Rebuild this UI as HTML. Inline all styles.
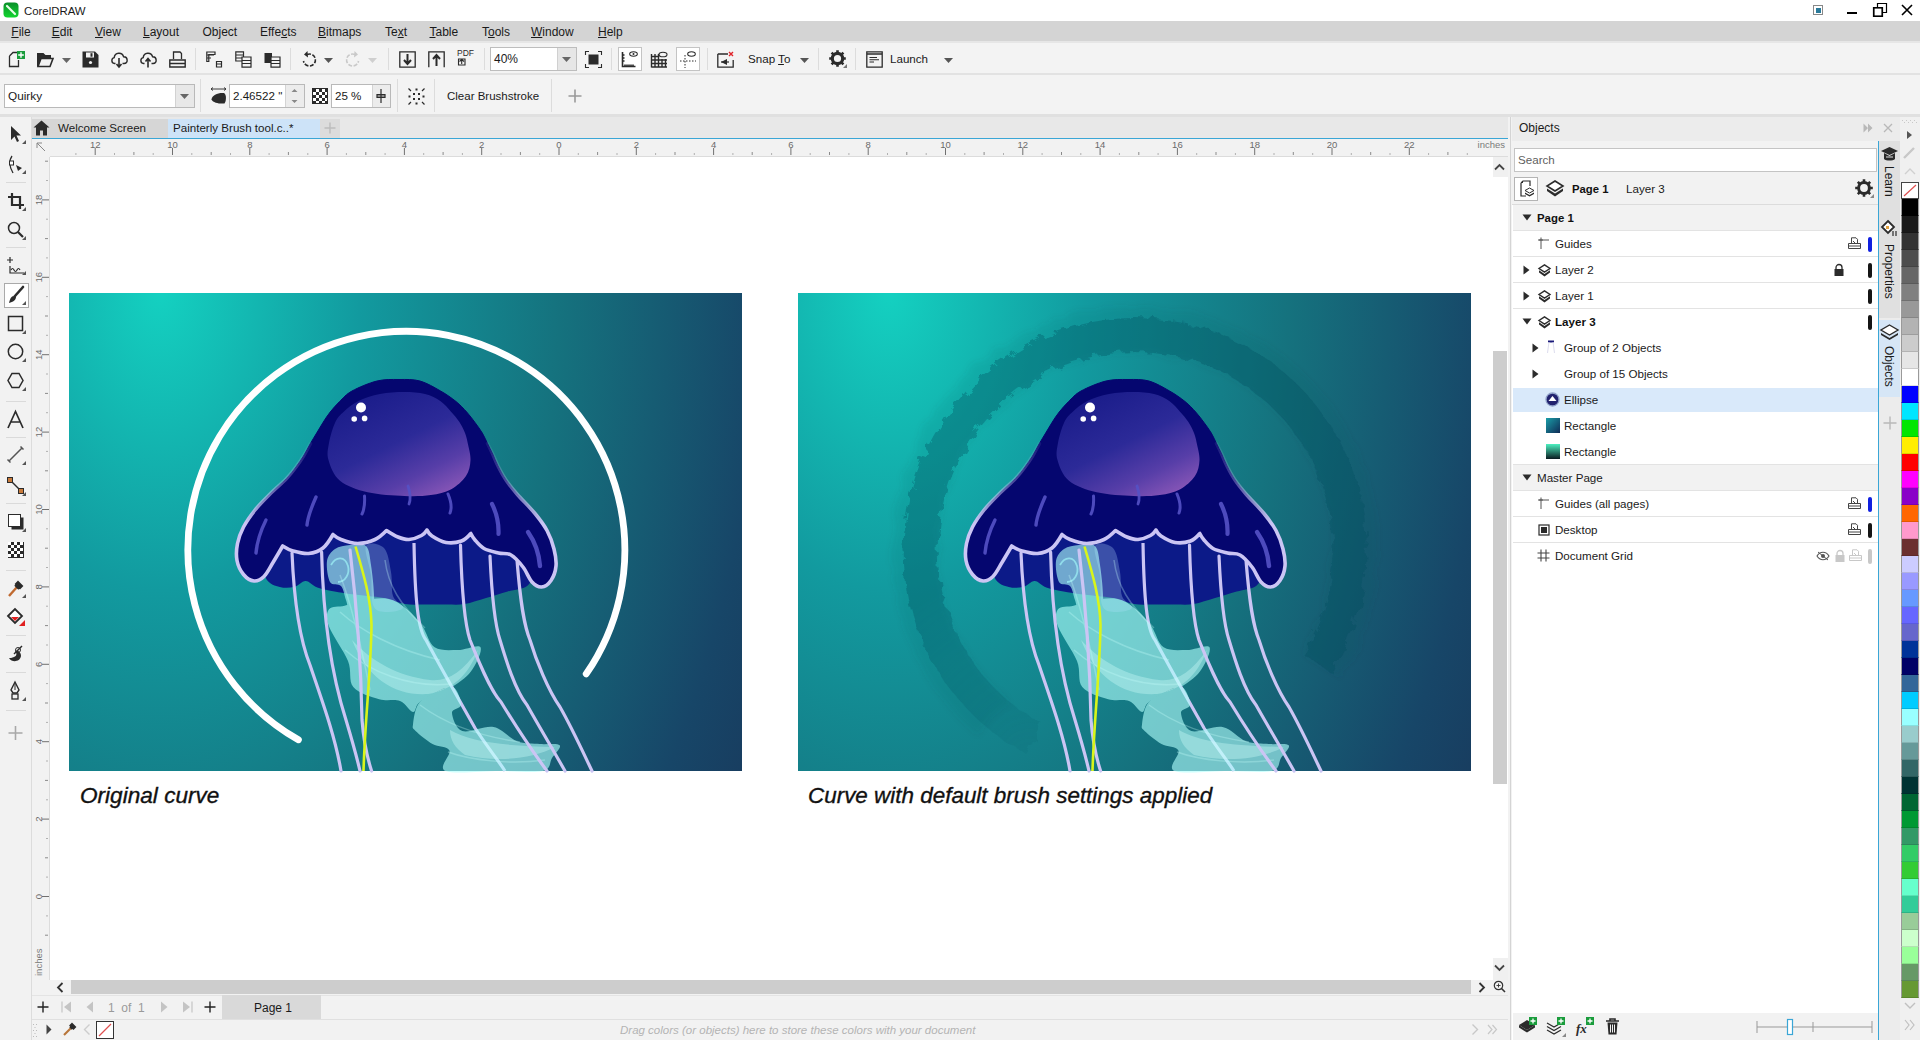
<!DOCTYPE html><html><head><meta charset="utf-8"><style>
*{margin:0;padding:0;box-sizing:border-box}
html,body{width:1920px;height:1040px;overflow:hidden;background:#f3f3f3;font-family:"Liberation Sans",sans-serif;color:#1a1a1a}
div{position:absolute}
.t{white-space:nowrap;font-size:12px;line-height:14px}
svg{position:absolute;overflow:visible}
</style></head><body><div style="left:0px;top:0px;width:1920px;height:21px;background:#fff"></div>
<svg style="left:3px;top:2px" width="16" height="16" viewBox="0 0 16 16"><defs><linearGradient id="lg" x1="0" y1="0" x2="0" y2="1"><stop offset="0" stop-color="#0a8f2a"/><stop offset="1" stop-color="#12d62f"/></linearGradient></defs><rect x="0.5" y="0.5" width="15" height="15" rx="4" fill="url(#lg)"/><path d="M4 4 L12 12" stroke="#e8ffe8" stroke-width="2.2" stroke-linecap="round"/></svg>
<div class="t" style="left:24px;top:4px;font-size:11.4px;color:#1a1a1a">CorelDRAW</div>
<svg style="left:1812px;top:4px" width="12" height="12"><rect x="1.5" y="1.5" width="9" height="9" fill="#fff" stroke="#888"/><rect x="4" y="4" width="5" height="5" fill="#2a7a9a"/></svg>
<div style="left:1847px;top:12px;width:10px;height:2px;background:#000"></div>
<svg style="left:1873px;top:3px" width="14" height="14"><path d="M4.5 0.5h9v9h-9z M0.5 4.5h9v9h-9z" fill="none" stroke="#000" stroke-width="1.2"/><rect x="1" y="5" width="8" height="8" fill="#fff" stroke="#000" stroke-width="1.2"/></svg>
<svg style="left:1901px;top:4px" width="12" height="12"><path d="M1 1L11 11M11 1L1 11" stroke="#000" stroke-width="1.6"/></svg>
<div style="left:0px;top:21px;width:1920px;height:20px;background:#d4d4d4"></div>
<div style="left:0px;top:41px;width:1920px;height:2px;background:#e6e6e6"></div>
<div class="t" style="left:11.3px;top:25px;font-size:12px;color:#1a1a1a"><u>F</u>ile</div>
<div class="t" style="left:51.7px;top:25px;font-size:12px;color:#1a1a1a"><u>E</u>dit</div>
<div class="t" style="left:95px;top:25px;font-size:12px;color:#1a1a1a"><u>V</u>iew</div>
<div class="t" style="left:143px;top:25px;font-size:12px;color:#1a1a1a"><u>L</u>ayout</div>
<div class="t" style="left:202.5px;top:25px;font-size:12px;color:#1a1a1a">Ob<u>j</u>ect</div>
<div class="t" style="left:260px;top:25px;font-size:12px;color:#1a1a1a">Effe<u>c</u>ts</div>
<div class="t" style="left:318px;top:25px;font-size:12px;color:#1a1a1a"><u>B</u>itmaps</div>
<div class="t" style="left:385px;top:25px;font-size:12px;color:#1a1a1a">Te<u>x</u>t</div>
<div class="t" style="left:429.5px;top:25px;font-size:12px;color:#1a1a1a"><u>T</u>able</div>
<div class="t" style="left:482px;top:25px;font-size:12px;color:#1a1a1a">T<u>o</u>ols</div>
<div class="t" style="left:531px;top:25px;font-size:12px;color:#1a1a1a"><u>W</u>indow</div>
<div class="t" style="left:598px;top:25px;font-size:12px;color:#1a1a1a"><u>H</u>elp</div>
<div style="left:0px;top:43px;width:1920px;height:31px;background:#f3f3f3"></div>
<div style="left:0px;top:73px;width:1920px;height:2px;background:#e2e2e2"></div>
<div style="left:0px;top:75px;width:1920px;height:40px;background:#f3f3f3"></div>
<div style="left:0px;top:114px;width:1920px;height:3px;background:#e0e0e0"></div>
<div style="left:0px;top:117px;width:31px;height:923px;background:#f2f2f2"></div>
<div style="left:31px;top:117px;width:1px;height:923px;background:#dcdcdc"></div>
<div style="left:32px;top:117px;width:1476px;height:21px;background:#e8e8e8"></div>
<div style="left:32px;top:119px;width:136px;height:19px;background:#d6d6d6"></div>
<div style="left:168px;top:119px;width:152px;height:19px;background:#cde3f8"></div>
<div style="left:320px;top:119px;width:20px;height:19px;background:#dcdcdc"></div>
<div style="left:32px;top:138px;width:1476px;height:1px;background:#3aa6d6"></div>
<div style="left:32px;top:139px;width:1476px;height:18px;background:#f2f2f2"></div>
<div style="left:32px;top:157px;width:18px;height:823px;background:#f2f2f2"></div>
<div style="left:50px;top:156px;width:1458px;height:1px;background:#dcdcdc"></div>
<div style="left:49px;top:157px;width:1px;height:823px;background:#dcdcdc"></div>
<div style="left:50px;top:157px;width:1458px;height:823px;background:#fff"></div>
<svg style="left:0;top:0" width="1920" height="1040" viewBox="0 0 1920 1040">
<defs>
<radialGradient id="bg" gradientUnits="userSpaceOnUse" cx="160" cy="290" r="800" gradientTransform="translate(160,290) scale(1,1.5) translate(-160,-290)"><stop offset="0" stop-color="#14d1c1"/><stop offset="0.25" stop-color="#129a9f"/><stop offset="0.5" stop-color="#15727e"/><stop offset="0.75" stop-color="#174668"/><stop offset="1" stop-color="#1a2c50"/></radialGradient>
<radialGradient id="bg2" gradientUnits="userSpaceOnUse" cx="889" cy="290" r="800" gradientTransform="translate(889,290) scale(1,1.5) translate(-889,-290)"><stop offset="0" stop-color="#14d1c1"/><stop offset="0.25" stop-color="#129a9f"/><stop offset="0.5" stop-color="#15727e"/><stop offset="0.75" stop-color="#174668"/><stop offset="1" stop-color="#1a2c50"/></radialGradient>
<linearGradient id="dome" x1="0.2" y1="0.05" x2="0.85" y2="1"><stop offset="0" stop-color="#1a1c8a"/><stop offset="0.45" stop-color="#2c2a98"/><stop offset="0.75" stop-color="#573ea8"/><stop offset="1" stop-color="#8c58b8"/></linearGradient>
<radialGradient id="fadeG"><stop offset="0" stop-color="#303030"/><stop offset="0.3" stop-color="#6a6a6a"/><stop offset="0.65" stop-color="#b0b0b0"/><stop offset="1" stop-color="#fff"/></radialGradient><filter id="soft" x="-10%" y="-10%" width="120%" height="120%"><feTurbulence type="fractalNoise" baseFrequency="0.05" numOctaves="2" seed="7"/><feDisplacementMap in="SourceGraphic" scale="10" result="d"/><feGaussianBlur in="d" stdDeviation="3"/></filter><filter id="rough" x="-10%" y="-10%" width="120%" height="120%"><feTurbulence type="fractalNoise" baseFrequency="0.09" numOctaves="3" seed="3"/><feDisplacementMap in="SourceGraphic" scale="12"/></filter>
<linearGradient id="efg" x1="0" y1="0" x2="0" y2="1"><stop offset="0" stop-color="#000"/><stop offset="0.3" stop-color="#555"/><stop offset="0.55" stop-color="#fff"/><stop offset="1" stop-color="#fff"/></linearGradient>
<mask id="edgefade" maskUnits="userSpaceOnUse" x="200" y="430" width="400" height="170"><rect x="200" y="430" width="400" height="170" fill="url(#efg)"/></mask>
<g id="jf"><path d="M262.0,560.0 C259.8,565.8 263.8,575.2 266.8,579.7 C269.8,584.2 275.3,585.8 279.8,587.0 C284.3,588.2 289.7,588.0 294.0,587.0 C298.3,586.0 301.8,580.9 305.7,581.0 C309.6,581.1 312.5,585.8 317.3,587.5 C322.1,589.2 329.2,590.4 334.6,591.5 C340.1,592.6 344.4,593.2 350.0,594.0 C355.6,594.8 362.3,595.3 368.0,596.0 C373.7,596.7 377.8,596.7 384.0,598.0 C390.2,599.3 398.0,602.9 405.0,604.0 C412.0,605.1 419.2,604.4 426.0,604.5 C432.8,604.6 439.6,604.6 446.0,604.5 C452.4,604.4 457.9,605.1 464.6,604.0 C471.3,602.9 478.8,600.1 486.0,598.0 C493.2,595.9 500.8,593.6 507.7,591.5 C514.6,589.4 523.7,589.0 527.7,585.4 C531.8,581.8 533.3,576.7 532.0,570.0 C530.7,563.3 542.0,551.7 520.0,545.0 C498.0,538.3 440.0,530.0 400.0,530.0 C360.0,530.0 303.0,540.0 280.0,545.0 C257.0,550.0 264.2,554.2 262.0,560.0 Z" fill="#0c1a88"/>
<path d="M414,543 C415,600 418,630 426,640 C440,666 458,698 475,728 C488,748 498,760 505,771" fill="none" stroke="#cbc5f4" stroke-width="3.2"/>
<path d="M366.0,546.0 C368.2,541.5 379.8,543.7 384.0,548.0 C388.2,552.3 389.5,564.0 391.0,572.0 C392.5,580.0 391.0,590.0 393.0,596.0 C395.0,602.0 404.3,605.3 403.0,608.0 C401.7,610.7 390.0,612.5 385.0,612.0 C380.0,611.5 375.3,611.2 373.0,605.0 C370.7,598.8 372.2,584.8 371.0,575.0 C369.8,565.2 363.8,550.5 366.0,546.0 Z" fill="#8aa8e0" opacity="0.38"/>
<g fill="#aefffb" opacity="0.62">
<path d="M327.0,561.0 C327.8,555.5 331.2,551.7 335.0,549.0 C338.8,546.3 344.8,545.5 350.0,545.0 C355.2,544.5 362.5,542.7 366.0,546.0 C369.5,549.3 369.7,556.8 371.0,565.0 C372.3,573.2 373.8,586.7 374.0,595.0 C374.2,603.3 375.7,611.7 372.0,615.0 C368.3,618.3 356.3,617.5 352.0,615.0 C347.7,612.5 347.8,604.8 346.0,600.0 C344.2,595.2 343.7,589.0 341.0,586.0 C338.3,583.0 332.3,586.2 330.0,582.0 C327.7,577.8 326.2,566.5 327.0,561.0 Z"/>
<path d="M329.0,609.2 C331.6,605.7 339.1,607.2 344.6,605.7 C350.1,604.2 354.8,601.6 362.0,600.5 C369.2,599.4 380.5,597.3 388.0,598.8 C395.5,600.2 401.1,604.6 406.9,609.2 C412.6,613.8 417.9,620.1 422.5,626.5 C427.1,632.9 428.7,643.4 434.6,647.3 C440.5,651.2 450.4,650.0 458.0,650.0 C465.6,650.0 478.4,643.7 480.5,647.3 C482.6,650.9 475.7,664.9 470.9,671.5 C466.1,678.1 456.8,684.0 451.9,687.0 C447.0,690.0 447.0,686.9 441.6,689.4 C436.2,691.9 424.3,698.5 419.5,702.3 C414.7,706.1 416.2,712.2 413.0,712.0 C409.8,711.8 405.6,703.1 400.0,701.0 C394.4,698.9 387.0,701.5 379.2,699.2 C371.4,696.9 358.5,693.4 353.3,687.0 C348.1,680.6 352.1,671.1 348.0,661.0 C343.9,650.9 332.2,635.1 329.0,626.5 C325.8,617.9 326.4,612.7 329.0,609.2 Z"/>
<path d="M413.0,724.4 C413.6,719.6 414.7,708.1 419.5,702.3 C424.3,696.5 435.8,691.8 441.6,689.4 C447.4,687.0 451.3,685.4 454.5,688.0 C457.7,690.6 461.4,700.9 461.0,705.0 C460.6,709.1 451.8,708.4 452.0,712.7 C452.2,717.0 455.4,728.6 462.3,731.0 C469.2,733.4 484.4,725.3 493.5,727.0 C502.6,728.7 509.2,738.5 517.0,741.3 C524.8,744.1 532.9,743.4 540.0,744.0 C547.1,744.6 557.7,742.9 559.7,745.2 C561.7,747.5 554.8,753.7 552.0,758.0 C549.2,762.3 551.6,768.8 542.9,771.0 C534.2,773.2 516.2,771.0 500.0,771.0 C483.8,771.0 453.9,774.4 445.5,771.0 C437.1,767.6 451.6,754.9 449.4,750.4 C447.2,745.9 438.1,747.2 432.5,744.0 C426.9,740.8 418.9,734.3 415.6,731.0 C412.4,727.7 412.4,729.2 413.0,724.4 Z"/>
</g>
<path d="M331,565 C336,556 345,556 348,566 C350,574 345,582 338,582" fill="none" stroke="#9ff4f6" stroke-width="1.8" opacity="0.7"/>
<g fill="#d2fffc" opacity="0.35">
<path d="M352,640 C372,662 398,676 430,680 C448,682 462,672 478,650 C468,676 452,690 428,694 C396,696 368,680 352,640 Z"/>
<path d="M450,730 C470,742 505,746 555,747 C530,760 495,762 465,755 C455,748 450,740 450,730 Z"/>
</g>
<g fill="none" stroke="#c8fffc" stroke-width="1.5" opacity="0.3">
<path d="M340,612 C360,630 395,650 440,660"/>
<path d="M345,650 C370,672 410,688 450,684"/>
<path d="M420,705 C440,720 470,735 520,742"/>
<path d="M448,752 C470,760 510,765 545,760"/>
<path d="M385,560 C388,585 400,605 425,628"/>
<path d="M340,575 C350,600 360,640 370,690"/>
</g>
<g fill="none" stroke="#cbc5f4" stroke-width="3.2" stroke-linecap="round">
<path d="M292,553 C294,600 300,640 310,665 C320,695 335,735 341,771"/>
<path d="M321.6,552 C323,610 330,670 346,720 C352,740 357,758 360,771"/>
<path d="M350,550 C356,600 361,660 362,720 C364,745 368,760 371.6,771"/>
<path d="M460.5,545 C462,600 465,625 470,640 C478,660 490,690 501,702 C515,725 530,748 547,771"/>
<path d="M490,556 C492,600 495,625 500,640 C506,660 515,690 527,705 C540,728 552,748 565,771"/>
<path d="M517,560 C521,610 525,628 530,640 C536,660 548,690 560,707 C572,728 582,750 592,771"/>
</g>
<path d="M355.5,546.5 C364,575 371,600 371.5,625 C371,670 365,720 363.5,771" fill="none" stroke="#d8f51a" stroke-width="2.6"/>
<path d="M399.0,379.5 C406.2,379.5 413.1,379.1 420.0,381.0 C426.9,382.9 434.6,387.6 440.6,391.0 C446.6,394.4 451.6,398.0 456.0,401.5 C460.4,405.0 463.5,408.5 466.7,412.0 C469.9,415.5 472.4,419.0 475.0,422.5 C477.6,426.0 480.2,429.5 482.3,433.0 C484.4,436.5 485.8,440.0 487.5,443.5 C489.2,447.0 490.9,450.2 492.7,454.0 C494.4,457.8 495.8,461.7 498.0,466.0 C500.2,470.3 502.8,475.3 506.0,480.0 C509.2,484.7 512.2,488.4 517.0,494.0 C521.8,499.6 530.0,507.4 535.0,513.5 C540.0,519.6 543.8,524.6 547.0,530.5 C550.2,536.4 552.5,543.1 554.0,549.0 C555.5,554.9 556.5,560.8 556.0,566.0 C555.5,571.2 553.4,577.0 551.0,580.5 C548.6,584.0 544.7,586.8 541.5,587.0 C538.3,587.2 535.1,585.3 532.0,582.0 C528.9,578.7 526.5,571.5 523.0,567.0 C519.5,562.5 515.1,557.3 511.0,555.0 C506.9,552.7 503.0,554.1 498.5,553.0 C494.0,551.9 487.9,550.7 484.0,548.5 C480.1,546.3 477.2,542.5 475.0,540.0 C472.8,537.5 470.8,533.5 470.8,533.5 C470.8,533.5 465.6,539.5 461.5,541.0 C457.4,542.5 450.9,543.3 446.0,542.5 C441.1,541.7 435.2,538.1 432.0,536.0 C428.8,533.9 427.0,530.0 427.0,530.0 C427.0,530.0 424.5,533.9 421.5,535.5 C418.5,537.1 412.9,539.2 409.0,539.5 C405.1,539.8 401.8,538.5 398.0,537.0 C394.2,535.5 386.5,530.5 386.5,530.5 C386.5,530.5 379.8,537.3 375.0,539.5 C370.2,541.7 363.4,543.5 357.7,543.5 C352.0,543.5 345.1,541.0 341.0,539.5 C336.9,538.0 333.0,534.5 333.0,534.5 C333.0,534.5 327.1,544.8 323.0,548.0 C318.9,551.2 313.6,553.0 308.6,553.5 C303.6,554.0 297.3,552.2 293.0,551.0 C288.7,549.8 282.7,546.0 282.7,546.0 C282.7,546.0 276.1,557.4 273.0,562.5 C269.9,567.6 267.2,573.4 264.0,576.5 C260.8,579.6 257.4,581.3 254.0,581.0 C250.6,580.7 246.3,577.9 243.5,574.5 C240.7,571.1 238.0,565.7 237.0,560.5 C236.0,555.3 236.4,549.1 237.5,543.5 C238.6,537.9 240.6,532.6 243.5,527.0 C246.4,521.4 250.7,515.4 255.0,510.0 C259.3,504.6 264.2,499.8 269.5,494.5 C274.8,489.2 282.1,483.1 286.5,478.5 C290.9,473.9 293.2,470.8 296.0,467.0 C298.8,463.2 301.1,459.9 303.5,456.0 C305.9,452.1 308.2,447.3 310.4,443.5 C312.6,439.7 314.6,436.5 316.7,433.0 C318.8,429.5 320.8,426.0 323.0,422.5 C325.2,419.0 327.4,415.5 330.2,412.0 C333.0,408.5 336.0,405.0 339.6,401.5 C343.2,398.0 345.8,394.4 352.0,391.0 C358.2,387.6 369.2,382.9 377.0,381.0 C384.8,379.1 391.8,379.5 399.0,379.5 Z" fill="#05066f" stroke="#05066f" stroke-width="1"/>
<path d="M487.5,443.5 C488.4,445.2 490.9,450.2 492.7,454.0 C494.4,457.8 495.8,461.7 498.0,466.0 C500.2,470.3 502.8,475.3 506.0,480.0 C509.2,484.7 512.2,488.4 517.0,494.0 C521.8,499.6 530.0,507.4 535.0,513.5 C540.0,519.6 543.8,524.6 547.0,530.5 C550.2,536.4 552.5,543.1 554.0,549.0 C555.5,554.9 556.5,560.8 556.0,566.0 C555.5,571.2 553.4,577.0 551.0,580.5 C548.6,584.0 544.7,586.8 541.5,587.0 C538.3,587.2 535.1,585.3 532.0,582.0 C528.9,578.7 526.5,571.5 523.0,567.0 C519.5,562.5 515.1,557.3 511.0,555.0 C506.9,552.7 503.0,554.1 498.5,553.0 C494.0,551.9 487.9,550.7 484.0,548.5 C480.1,546.3 477.2,542.5 475.0,540.0 C472.8,537.5 470.8,533.5 470.8,533.5 C470.8,533.5 465.6,539.5 461.5,541.0 C457.4,542.5 450.9,543.3 446.0,542.5 C441.1,541.7 435.2,538.1 432.0,536.0 C428.8,533.9 427.0,530.0 427.0,530.0 C427.0,530.0 424.5,533.9 421.5,535.5 C418.5,537.1 412.9,539.2 409.0,539.5 C405.1,539.8 401.8,538.5 398.0,537.0 C394.2,535.5 386.5,530.5 386.5,530.5 C386.5,530.5 379.8,537.3 375.0,539.5 C370.2,541.7 363.4,543.5 357.7,543.5 C352.0,543.5 345.1,541.0 341.0,539.5 C336.9,538.0 333.0,534.5 333.0,534.5 C333.0,534.5 327.1,544.8 323.0,548.0 C318.9,551.2 313.6,553.0 308.6,553.5 C303.6,554.0 297.3,552.2 293.0,551.0 C288.7,549.8 282.7,546.0 282.7,546.0 C282.7,546.0 276.1,557.4 273.0,562.5 C269.9,567.6 267.2,573.4 264.0,576.5 C260.8,579.6 257.4,581.3 254.0,581.0 C250.6,580.7 246.3,577.9 243.5,574.5 C240.7,571.1 238.0,565.7 237.0,560.5 C236.0,555.3 236.4,549.1 237.5,543.5 C238.6,537.9 240.6,532.6 243.5,527.0 C246.4,521.4 250.7,515.4 255.0,510.0 C259.3,504.6 264.2,499.8 269.5,494.5 C274.8,489.2 282.1,483.1 286.5,478.5 C290.9,473.9 293.2,470.8 296.0,467.0 C298.8,463.2 301.1,459.9 303.5,456.0 C305.9,452.1 309.2,445.6 310.4,443.5" fill="none" stroke="#cbc5f4" stroke-width="3.6" stroke-linejoin="round" stroke-linecap="round" mask="url(#edgefade)"/>
<path d="M404.0,392.0 C411.5,392.0 418.9,392.5 425.0,394.0 C431.1,395.5 436.3,398.3 440.6,401.2 C444.9,404.2 447.9,408.2 451.0,411.7 C454.1,415.2 457.1,418.4 459.4,422.0 C461.7,425.6 463.6,429.5 465.0,433.0 C466.4,436.5 466.8,438.5 467.7,443.0 C468.6,447.5 470.8,454.5 470.5,460.0 C470.2,465.5 469.3,471.1 466.0,476.0 C462.7,480.9 456.7,486.3 450.8,489.5 C444.9,492.7 438.5,493.9 430.8,495.0 C423.1,496.1 415.1,496.4 404.6,496.0 C394.1,495.6 378.5,494.8 367.7,492.3 C356.9,489.8 346.5,486.2 340.0,480.8 C333.5,475.4 330.3,466.3 328.5,460.0 C326.7,453.7 327.9,449.3 329.0,443.0 C330.1,436.7 332.9,427.2 335.4,422.0 C337.9,416.8 340.0,415.2 343.8,411.7 C347.5,408.2 352.0,404.2 358.0,401.2 C364.0,398.3 372.3,395.5 380.0,394.0 C387.7,392.5 396.5,392.0 404.0,392.0 Z" fill="url(#dome)"/>
<g fill="none" stroke="#5552c6" stroke-linecap="round" opacity="0.9">
<path d="M492,504 C496,512 499,522 498.5,534" stroke-width="4.2"/>
<path d="M528,532 C535,542 539,553 540,566" stroke-width="4.4"/>
<path d="M316,497 C312,506 308,515 307,525" stroke-width="3.4"/>
<path d="M266,520 C261,530 257,542 256,553" stroke-width="3.4"/>
<path d="M364.5,496 C365,504 364,510 362,514" stroke-width="3"/>
<path d="M448,494 C451,501 452,508 450,513" stroke-width="3"/>
<path d="M408,486 C410,492 411,499 409,504" stroke-width="2.8"/>
</g>
<circle cx="361" cy="407.5" r="5" fill="#fff"/><circle cx="354.2" cy="419" r="2.8" fill="#fff"/><circle cx="364.6" cy="418.4" r="2.8" fill="#fff"/></g>
</defs>
<rect x="69" y="293" width="673" height="478" fill="url(#bg)"/>
<path d="M298.4,739.8 A218.5,218.5 0 1 1 586.2,673.9" fill="none" stroke="#fff" stroke-width="6.8" stroke-linecap="round"/>
<use href="#jf"/>
<rect x="798" y="293" width="673" height="478" fill="url(#bg2)"/>
<g filter="url(#soft)"><path d="M993.7,718.2 A220,220 0 1 1 1321.7,666.2" fill="none" stroke="#0a4a5c" stroke-opacity="0.09" stroke-width="46"/></g>
<mask id="bfade" maskUnits="userSpaceOnUse" x="798" y="293" width="673" height="478"><rect x="798" y="293" width="673" height="478" fill="#fff"/><circle cx="1030" cy="760" r="190" fill="url(#fadeG)"/></mask>
<g mask="url(#bfade)"><g filter="url(#rough)">
<path d="M1034.4,739.0 A214.5,214.5 0 1 1 1317.0,663.3" fill="none" stroke="#0a4a5c" stroke-opacity="0.32" stroke-width="34"/>
</g></g>
<use href="#jf" x="729"/>
</svg>
<div class="t" style="left:80px;top:783px;font-style:italic;font-size:22.6px;line-height:25px;color:#111;-webkit-text-stroke:0.35px #111">Original curve</div>
<div class="t" style="left:808px;top:783px;font-style:italic;font-size:22.45px;line-height:25px;color:#111;-webkit-text-stroke:0.35px #111">Curve with default brush settings applied</div>
<div style="left:1493px;top:351px;width:14px;height:433px;background:#cdcdcd"></div>
<div style="left:32px;top:980px;width:1476px;height:15px;background:#f2f2f2"></div>
<div style="left:71px;top:980px;width:1400px;height:14px;background:#cdcdcd"></div>
<div style="left:32px;top:995px;width:1476px;height:25px;background:#f2f2f2"></div>
<div style="left:32px;top:995px;width:1476px;height:1px;background:#e4e4e4"></div>
<div style="left:222px;top:995px;width:99px;height:24px;background:#d9d9d9"></div>
<div style="left:32px;top:1019px;width:1476px;height:1px;background:#e0e0e0"></div>
<div style="left:32px;top:1020px;width:1476px;height:20px;background:#f2f2f2"></div>
<div style="left:1508px;top:117px;width:4px;height:923px;background:#f2f2f2"></div>
<div style="left:1510px;top:117px;width:1px;height:923px;background:#d4d4d4"></div>
<div style="left:1512px;top:117px;width:367px;height:923px;background:#fff"></div>
<div style="left:1512px;top:117px;width:367px;height:24px;background:#ececec"></div>
<div style="left:1512px;top:141px;width:367px;height:64px;background:#f2f2f2"></div>
<div style="left:1878px;top:141px;width:1px;height:899px;background:#3aa6d6"></div>
<div style="left:1879px;top:117px;width:21px;height:923px;background:#ececec"></div>
<div style="left:1879px;top:141px;width:21px;height:177px;background:#e0e0e0"></div>
<div style="left:1879px;top:320px;width:21px;height:77px;background:#d6e6f6"></div>
<div style="left:1900px;top:117px;width:20px;height:923px;background:#f0f0f0"></div>
<svg style="left:8px;top:51px" width="17" height="17" viewBox="0 0 17 17" ><path d="M1.5,5 L5,1.5 H10 M1.5,5 V15.5 H10.5 V9" fill="none" stroke="#2b2b2b" stroke-width="1.3"/><rect x="9" y="0" width="8" height="8" fill="#1a9c3c"/><path d="M13,1.2 V6.8 M10.2,4 H15.8" stroke="#fff" stroke-width="1.4"/></svg>
<svg style="left:37px;top:51px" width="17" height="17" viewBox="0 0 17 17" ><path d="M1,15.5 V3 H6 L8,5 H13 V7" fill="none" stroke="#2b2b2b" stroke-width="2"/><path d="M1,15.5 L4,7.5 H16 L13,15.5 Z" fill="none" stroke="#2b2b2b" stroke-width="1.6"/><path d="M1,3 H6 L8,5 H13 V7.5 H4 L1,15 Z" fill="#2b2b2b"/></svg>
<svg style="left:62px;top:58px" width="9" height="5" viewBox="0 0 9 5" ><path d="M0,0 H9 L4.5,5 Z" fill="#666"/></svg>
<svg style="left:82px;top:51px" width="17" height="17" viewBox="0 0 17 17" ><path d="M0.5,0.5 H13 L16.5,4 V16.5 H0.5 Z" fill="#2b2b2b"/><rect x="4" y="1.5" width="8" height="5" fill="#f3f3f3"/><rect x="8.5" y="2.2" width="2" height="3.5" fill="#2b2b2b"/><circle cx="8.5" cy="11.5" r="1.6" fill="#f3f3f3"/></svg>
<svg style="left:111px;top:51px" width="17" height="17" viewBox="0 0 17 17" ><path d="M4.5,12.5 H3.5 A3,3 0 0 1 3.2,6.6 A4.8,4.8 0 0 1 12.6,5.8 A3.3,3.3 0 0 1 13,12.5 H11.5" fill="none" stroke="#2b2b2b" stroke-width="1.4"/><path d="M8,7 V15.5 M5.5,13 L8,16 L10.5,13" fill="none" stroke="#2b2b2b" stroke-width="1.6"/></svg>
<svg style="left:140px;top:51px" width="17" height="17" viewBox="0 0 17 17" ><path d="M4.5,12.5 H3.5 A3,3 0 0 1 3.2,6.6 A4.8,4.8 0 0 1 12.6,5.8 A3.3,3.3 0 0 1 13,12.5 H11.5" fill="none" stroke="#2b2b2b" stroke-width="1.4"/><path d="M8,16.5 V8 M5.5,10.5 L8,7.5 L10.5,10.5" fill="none" stroke="#2b2b2b" stroke-width="1.6"/></svg>
<svg style="left:169px;top:51px" width="17" height="17" viewBox="0 0 17 17" ><path d="M4.5,8 V1 H11 L12.5,2.5 V8" fill="none" stroke="#2b2b2b" stroke-width="1.3"/><path d="M0.8,9 V16 H16.2 V9 Z M0.8,12.5 H16.2" fill="none" stroke="#2b2b2b" stroke-width="1.4"/></svg>
<div style="left:195px;top:48px;width:1px;height:22px;background:#dcdcdc"></div>
<svg style="left:206px;top:51px" width="17" height="17" viewBox="0 0 17 17" ><path d="M0.8,1 H9 V3.5 H2.8 V10.5 H0.8 Z" fill="none" stroke="#2b2b2b" stroke-width="1.2"/><path d="M1,4 H8 M1,7 H5" stroke="#2b2b2b"/><path d="M10.5,10.5 H15.5 V16 H10.5 Z M11,13 H15" fill="none" stroke="#2b2b2b" stroke-width="1.2"/></svg>
<svg style="left:235px;top:51px" width="17" height="17" viewBox="0 0 17 17" ><path d="M0.8,0.8 H8.5 V10 H0.8 Z M1,4 H8 M1,7 H8" fill="none" stroke="#2b2b2b" stroke-width="1.2"/><path d="M7,6 H16 V16.2 H7 Z M7.5,9.5 H15.5 M7.5,12.5 H15.5" fill="#f3f3f3" stroke="#2b2b2b" stroke-width="1.2"/></svg>
<svg style="left:264px;top:51px" width="17" height="17" viewBox="0 0 17 17" ><path d="M0.5,2 H8 V12 H0.5 Z" fill="#2b2b2b"/><path d="M7,6 H16 V16.2 H7 Z M7.5,9.5 H15.5 M7.5,12.5 H15.5" fill="#f3f3f3" stroke="#2b2b2b" stroke-width="1.2"/></svg>
<div style="left:290px;top:48px;width:1px;height:22px;background:#dcdcdc"></div>
<svg style="left:301px;top:51px" width="17" height="17" viewBox="0 0 17 17" ><path d="M6,3.5 A6,6 0 1 1 2.5,10" fill="none" stroke="#2b2b2b" stroke-width="1.6" stroke-dasharray="4 1.5"/><path d="M6.5,0 L3,3.6 L7,6.5 Z" fill="#2b2b2b"/></svg>
<svg style="left:324px;top:58px" width="9" height="5" viewBox="0 0 9 5" ><path d="M0,0 H9 L4.5,5 Z" fill="#555"/></svg>
<svg style="left:345px;top:51px" width="17" height="17" viewBox="0 0 17 17" ><path d="M10,3.5 A6,6 0 1 0 13.5,10" fill="none" stroke="#c9c9c9" stroke-width="1.6" stroke-dasharray="4 1.5"/><path d="M9.5,0 L13,3.6 L9,6.5 Z" fill="#c9c9c9"/></svg>
<svg style="left:368px;top:58px" width="9" height="5" viewBox="0 0 9 5" ><path d="M0,0 H9 L4.5,5 Z" fill="#cfcfcf"/></svg>
<div style="left:388px;top:48px;width:1px;height:22px;background:#dcdcdc"></div>
<svg style="left:399px;top:51px" width="17" height="17" viewBox="0 0 17 17" ><path d="M0.8,0.8 H16.2 V16.2 H0.8 Z" fill="none" stroke="#2b2b2b" stroke-width="1.3"/><path d="M8.5,3 V12 M5,9 L8.5,13 L12,9" fill="none" stroke="#2b2b2b" stroke-width="2"/></svg>
<svg style="left:428px;top:51px" width="17" height="17" viewBox="0 0 17 17" ><path d="M0.8,16.2 V0.8 H16.2 V16.2" fill="none" stroke="#2b2b2b" stroke-width="1.3"/><path d="M8.5,15 V5 M5,8 L8.5,4 L12,8" fill="none" stroke="#2b2b2b" stroke-width="2"/></svg>
<svg style="left:457px;top:48px" width="19" height="19" viewBox="0 0 19 19" ><text x="0" y="8" font-family="Liberation Sans" font-size="8.5" fill="#2b2b2b">PDF</text><path d="M1.5,11 H8 V17 H1.5 Z M4.7,11.5 V16 M2.5,13.5 L4.7,11.5 L7,13.5" fill="none" stroke="#2b2b2b" stroke-width="1.1"/></svg>
<div style="left:484px;top:48px;width:1px;height:22px;background:#dcdcdc"></div>
<div style="left:490px;top:47px;width:87px;height:24px;background:#fff;border:1px solid #bdbdbd"></div>
<div style="left:557px;top:48px;width:19px;height:22px;background:#e6e6e6;border-left:1px solid #d0d0d0"></div>
<svg style="left:562px;top:57px" width="9" height="5" viewBox="0 0 9 5" ><path d="M0,0 H9 L4.5,5 Z" fill="#666"/></svg>
<div class="t" style="left:494px;top:52px;font-size:12px;color:#1a1a1a">40%</div>
<svg style="left:585px;top:51px" width="17" height="17" viewBox="0 0 17 17" ><rect x="3.5" y="3.5" width="10" height="10" fill="#2b2b2b"/><path d="M0.5,4 V0.5 H4 M13,0.5 H16.5 V4 M16.5,13 V16.5 H13 M4,16.5 H0.5 V13" fill="none" stroke="#2b2b2b" stroke-width="1.1"/></svg>
<div style="left:611px;top:48px;width:1px;height:22px;background:#dcdcdc"></div>
<div style="left:618px;top:47px;width:24px;height:24px;background:#fff;border:1px solid #c4c4c4"></div>
<svg style="left:621px;top:51px" width="18" height="17" viewBox="0 0 18 17" ><path d="M1.5,1 V15.5 H14.5 M1.5,15.5 V13 M4,15.5 V13.5 M6,15.5 V13.5 M8,15.5 V13.5 M10,15.5 V13.5 M12,15.5 V13.5 M1.5,4 H3.5 M1.5,7 H3.5 M1.5,10 H3.5" fill="none" stroke="#2b2b2b" stroke-width="1.6"/><ellipse cx="12.5" cy="3" rx="3.8" ry="2.2" fill="none" stroke="#2b2b2b" stroke-width="1.1"/><circle cx="12.5" cy="3" r="1" fill="#2b2b2b"/></svg>
<svg style="left:651px;top:51px" width="17" height="17" viewBox="0 0 17 17" ><path d="M0.5,3 V16.5 M4,3 V16.5 M7.5,3 V16.5 M11,8 V16.5 M14.5,8 V16.5 M0.5,5.5 H8 M0.5,9 H16 M0.5,12.5 H16 M0.5,16 H16" fill="none" stroke="#2b2b2b" stroke-width="1.4"/><ellipse cx="12" cy="3.5" rx="4" ry="2.3" fill="none" stroke="#2b2b2b" stroke-width="1.1"/></svg>
<div style="left:676px;top:47px;width:24px;height:24px;background:#fff;border:1px solid #c4c4c4"></div>
<svg style="left:679px;top:51px" width="18" height="17" viewBox="0 0 18 17" ><path d="M6,4 V17 M1,10 H17" fill="none" stroke="#2b2b2b" stroke-width="1" stroke-dasharray="1.5 1.5"/><ellipse cx="12.5" cy="3" rx="3.8" ry="2.2" fill="none" stroke="#2b2b2b" stroke-width="1.1"/></svg>
<div style="left:707px;top:48px;width:1px;height:22px;background:#dcdcdc"></div>
<svg style="left:717px;top:51px" width="17" height="17" viewBox="0 0 17 17" ><path d="M0.8,3 H11 M0.8,3 V16.2 H16.2 V9" fill="none" stroke="#2b2b2b" stroke-width="1.3"/><path d="M4,11 L10,8 L10,14 Z" fill="#2b2b2b"/><path d="M4,11 H12" stroke="#2b2b2b" stroke-width="1.2"/><path d="M12,1 L16,5 M16,1 L12,5" stroke="#e0242a" stroke-width="1.4"/></svg>
<div class="t" style="left:748px;top:52px;font-size:11.6px;color:#1a1a1a">Snap <u>T</u>o</div>
<svg style="left:800px;top:58px" width="9" height="5" viewBox="0 0 9 5" ><path d="M0,0 H9 L4.5,5 Z" fill="#555"/></svg>
<div style="left:818px;top:48px;width:1px;height:22px;background:#dcdcdc"></div>
<svg style="left:829px;top:50px" width="19" height="19" viewBox="0 0 19 19" ><g transform="translate(8.5,8.5)"><circle r="5.2" fill="none" stroke="#2b2b2b" stroke-width="3.2"/><g stroke="#2b2b2b" stroke-width="2.6"><path d="M0,-8.3 V-5.5 M0,8.3 V5.5 M-8.3,0 H-5.5 M8.3,0 H5.5 M-5.9,-5.9 L-3.9,-3.9 M5.9,5.9 L3.9,3.9 M-5.9,5.9 L-3.9,3.9 M5.9,-5.9 L3.9,-3.9"/></g></g><path d="M18,14 V18 H14 Z" fill="#777"/></svg>
<div style="left:855px;top:48px;width:1px;height:22px;background:#dcdcdc"></div>
<svg style="left:866px;top:51px" width="17" height="17" viewBox="0 0 17 17" ><path d="M0.8,0.8 H16.2 V16.2 H0.8 Z" fill="none" stroke="#2b2b2b" stroke-width="1.3"/><path d="M1,3 H16" stroke="#2b2b2b" stroke-width="1.5"/><path d="M3.5,6.5 H11 M3.5,8.8 H13 M3.5,11 H8" stroke="#2b2b2b" stroke-width="1.1"/></svg>
<div class="t" style="left:890px;top:52px;font-size:11.6px;color:#1a1a1a">Launch</div>
<svg style="left:944px;top:58px" width="9" height="5" viewBox="0 0 9 5" ><path d="M0,0 H9 L4.5,5 Z" fill="#555"/></svg>
<div style="left:4px;top:84px;width:191px;height:24px;background:#fff;border:1px solid #b9b9b9"></div>
<div style="left:175px;top:85px;width:19px;height:22px;background:#e8e8e8;border-left:1px solid #d2d2d2"></div>
<svg style="left:180px;top:94px" width="9" height="5" viewBox="0 0 9 5" ><path d="M0,0 H9 L4.5,5 Z" fill="#666"/></svg>
<div class="t" style="left:8px;top:89px;font-size:11.8px;color:#1a1a1a">Quirky</div>
<div style="left:200px;top:79px;width:1px;height:33px;background:#dcdcdc"></div>
<svg style="left:210px;top:87px" width="17" height="18" viewBox="0 0 17 18" ><path d="M1,2 H16 M1,2 L3,0.5 M1,2 L3,3.5 M16,2 L14,0.5 M16,2 L14,3.5" fill="none" stroke="#2b2b2b" stroke-width="0.9"/><path d="M1.5,12.5 C2,8 8,5.5 14,6 C16.5,7 16.5,14 14.5,16.5 C10,17 3,16 1.5,12.5 Z" fill="#2b2b2b"/></svg>
<div style="left:229px;top:84px;width:76px;height:24px;background:#fff;border:1px solid #b9b9b9"></div>
<div style="left:285px;top:85px;width:19px;height:22px;background:#ececec;border-left:1px solid #d4d4d4"></div>
<svg style="left:290px;top:88px" width="9" height="16" viewBox="0 0 9 16" ><path d="M1.5,4 L4.5,1 L7.5,4 Z M1.5,12 L4.5,15 L7.5,12 Z" fill="#888"/></svg>
<div class="t" style="left:233px;top:89px;font-size:11.6px;color:#1a1a1a">2.46522 "</div>
<svg style="left:312px;top:88px" width="16" height="16" viewBox="0 0 16 16" ><rect x="0.5" y="0.5" width="15" height="15" fill="#fff" stroke="#2b2b2b"/><path d="M1,1h3v3h-3zM7,1h3v3h-3zM13,1h2v3h-2zM4,4h3v3h-3zM10,4h3v3h-3zM1,7h3v3h-3zM7,7h3v3h-3zM13,7h2v3h-2zM4,10h3v3h-3zM10,10h3v3h-3zM1,13h3v2h-3zM7,13h3v2h-3zM13,13h2v2h-2z" fill="#2b2b2b"/></svg>
<div style="left:331px;top:84px;width:60px;height:24px;background:#fff;border:1px solid #b9b9b9"></div>
<div style="left:372px;top:85px;width:18px;height:22px;background:#ececec;border-left:1px solid #d4d4d4"></div>
<svg style="left:374px;top:88px" width="14" height="16" viewBox="0 0 14 16" ><path d="M7,1 V15 M2.5,8 H11.5 M3,6.5 H11 V9.5 H3 Z" fill="none" stroke="#2b2b2b" stroke-width="1.2"/></svg>
<div class="t" style="left:335px;top:89px;font-size:11.6px;color:#1a1a1a">25 %</div>
<div style="left:397px;top:79px;width:1px;height:33px;background:#dcdcdc"></div>
<svg style="left:408px;top:88px" width="17" height="17" viewBox="0 0 17 17" ><g fill="#2b2b2b"><rect x="5" y="5" width="2" height="2"/><rect x="10" y="5" width="2" height="2"/><rect x="5" y="10" width="2" height="2"/><rect x="10" y="10" width="2" height="2"/><rect x="7.5" y="0.5" width="2" height="2"/><rect x="7.5" y="14.5" width="2" height="2"/><rect x="0.5" y="7.5" width="2" height="2"/><rect x="14.5" y="7.5" width="2" height="2"/><path d="M0.5,0.5 L3,3 M16.5,0.5 L14,3 M0.5,16.5 L3,14 M16.5,16.5 L14,14" stroke="#2b2b2b" stroke-width="1.2"/></g></svg>
<div style="left:434px;top:79px;width:1px;height:33px;background:#dcdcdc"></div>
<div class="t" style="left:447px;top:89px;font-size:11.5px;color:#1a1a1a">Clear Brushstroke</div>
<div style="left:551px;top:79px;width:1px;height:33px;background:#dcdcdc"></div>
<svg style="left:568px;top:89px" width="14" height="14" viewBox="0 0 14 14" ><path d="M7,0.5 V13.5 M0.5,7 H13.5" stroke="#9a9a9a" stroke-width="1.6"/></svg>
<div style="left:6px;top:182px;width:20px;height:1px;background:#dadada"></div>
<div style="left:6px;top:247px;width:20px;height:1px;background:#dadada"></div>
<div style="left:6px;top:401px;width:20px;height:1px;background:#dadada"></div>
<div style="left:6px;top:437px;width:20px;height:1px;background:#dadada"></div>
<div style="left:6px;top:503px;width:20px;height:1px;background:#dadada"></div>
<div style="left:6px;top:570px;width:20px;height:1px;background:#dadada"></div>
<div style="left:6px;top:635px;width:20px;height:1px;background:#dadada"></div>
<div style="left:6px;top:672px;width:20px;height:1px;background:#dadada"></div>
<div style="left:6px;top:710px;width:20px;height:1px;background:#dadada"></div>
<div style="left:4px;top:283px;width:25px;height:25px;background:#fff;border:1px solid #aaa"></div>
<svg style="left:6px;top:124px" width="20" height="20" viewBox="0 0 20 20" ><path d="M5,2 L5,16 L8.5,12.5 L11,18 L13,17 L10.5,11.5 L15,11.5 Z" fill="#2b2b2b"/><path d="M20,20 h-4 l4,-4 z" fill="#555"/></svg>
<svg style="left:6px;top:154px" width="20" height="20" viewBox="0 0 20 20" ><path d="M6,2 C3,6 3,12 7,19" fill="none" stroke="#2b2b2b" stroke-width="1.3"/><rect x="3.5" y="7" width="4" height="4" fill="#fff" stroke="#2b2b2b"/><path d="M10,11 L16,14 L12,17 Z" fill="#2b2b2b"/><path d="M20,20 h-4 l4,-4 z" fill="#555"/></svg>
<svg style="left:6px;top:191px" width="20" height="20" viewBox="0 0 20 20" ><path d="M6,2 V14 H18 M2,6 H14 V18" fill="none" stroke="#2b2b2b" stroke-width="2.2"/><path d="M20,20 h-4 l4,-4 z" fill="#555"/></svg>
<svg style="left:6px;top:220px" width="20" height="20" viewBox="0 0 20 20" ><circle cx="8" cy="8" r="5.5" fill="none" stroke="#2b2b2b" stroke-width="1.5"/><path d="M12,12 L17,17" stroke="#2b2b2b" stroke-width="2.2"/><path d="M20,20 h-4 l4,-4 z" fill="#555"/></svg>
<svg style="left:6px;top:255px" width="20" height="20" viewBox="0 0 20 20" ><path d="M4,2 V8 M1,5 H7" stroke="#2b2b2b" stroke-width="1.2"/><path d="M4,11 V18 H18" fill="none" stroke="#2b2b2b" stroke-width="1.2"/><path d="M5,15 q1.5,-3 3,0 q1.5,3 3,0 q1.5,-3 3,0" fill="none" stroke="#2b2b2b" stroke-width="1.2"/><path d="M20,20 h-4 l4,-4 z" fill="#555"/></svg>
<svg style="left:6px;top:285px" width="20" height="20" viewBox="0 0 20 20" ><path d="M17,2 L9,11" stroke="#2b2b2b" stroke-width="2.6" stroke-linecap="round"/><path d="M8,11 C5,11 4,14 3,18 C7,17 10,15 10,12 Z" fill="#2b2b2b"/><path d="M20,20 h-4 l4,-4 z" fill="#555"/></svg>
<svg style="left:6px;top:314px" width="20" height="20" viewBox="0 0 20 20" ><rect x="2.5" y="2.5" width="14" height="14" fill="none" stroke="#2b2b2b" stroke-width="1.5"/><path d="M20,20 h-4 l4,-4 z" fill="#555"/></svg>
<svg style="left:6px;top:342px" width="20" height="20" viewBox="0 0 20 20" ><circle cx="9.5" cy="9.5" r="7.2" fill="none" stroke="#2b2b2b" stroke-width="1.5"/><path d="M20,20 h-4 l4,-4 z" fill="#555"/></svg>
<svg style="left:6px;top:371px" width="20" height="20" viewBox="0 0 20 20" ><path d="M6,2.5 H13 L17,9.5 L13,16.5 H6 L2,9.5 Z" fill="none" stroke="#2b2b2b" stroke-width="1.5"/><path d="M20,20 h-4 l4,-4 z" fill="#555"/></svg>
<svg style="left:6px;top:410px" width="20" height="20" viewBox="0 0 20 20" ><path d="M2,18 L9.5,1.5 L17,18 M5,12 H14" fill="none" stroke="#2b2b2b" stroke-width="1.7"/></svg>
<svg style="left:6px;top:445px" width="20" height="20" viewBox="0 0 20 20" ><path d="M3,16 L16,3 M1.5,14.5 L4.5,17.5 M14.5,1.5 L17.5,4.5" stroke="#555" stroke-width="1.5"/><path d="M20,20 h-4 l4,-4 z" fill="#555"/></svg>
<svg style="left:6px;top:476px" width="20" height="20" viewBox="0 0 20 20" ><path d="M4,4 L15,15" stroke="#2b2b2b" stroke-width="1.4"/><rect x="1.5" y="1.5" width="5" height="5" fill="#c87a3a" stroke="#2b2b2b"/><rect x="12.5" y="12.5" width="5" height="5" fill="#c87a3a" stroke="#2b2b2b"/><path d="M20,20 h-4 l4,-4 z" fill="#555"/></svg>
<svg style="left:6px;top:512px" width="20" height="20" viewBox="0 0 20 20" ><rect x="5.5" y="5.5" width="12" height="12" fill="#2b2b2b"/><rect x="2.5" y="2.5" width="12" height="12" fill="#fff" stroke="#2b2b2b"/><path d="M20,20 h-4 l4,-4 z" fill="#555"/></svg>
<svg style="left:6px;top:540px" width="20" height="20" viewBox="0 0 20 20" ><rect x="2" y="2" width="16" height="16" fill="#2b2b2b"/><path d="M2,2h3v3h-3zM8,2h3v3h-3zM14,2h3v3h-3zM5,5h3v3h-3zM11,5h3v3h-3zM2,8h3v3h-3zM8,8h3v3h-3zM14,8h3v3h-3zM5,11h3v3h-3zM11,11h3v3h-3zM2,14h3v3h-3zM8,14h3v3h-3zM14,14h3v3h-3z" fill="#fff"/></svg>
<svg style="left:6px;top:578px" width="20" height="20" viewBox="0 0 20 20" ><path d="M3,18 L11,9" stroke="#c06a30" stroke-width="2.4"/><path d="M9,7 L13,11 M12,4 L16,8 L14,10 L10,6 Z" stroke="#2b2b2b" stroke-width="2" fill="#2b2b2b"/><path d="M20,20 h-4 l4,-4 z" fill="#555"/></svg>
<svg style="left:6px;top:607px" width="20" height="20" viewBox="0 0 20 20" ><path d="M2,9 L9,2 L16,9 L9,16 Z" fill="#fff" stroke="#2b2b2b" stroke-width="1.8"/><path d="M5,10 H13 L9,14 Z" fill="#e02020"/><path d="M19,13 V19 H13 Z" fill="#e02020"/></svg>
<svg style="left:6px;top:644px" width="20" height="20" viewBox="0 0 20 20" ><path d="M3,14 C6,19 14,18 15,12 C15,8 12,6 9,7 C11,9 11,12 8,13 C6,14 4,14 3,14 Z" fill="#2b2b2b"/><path d="M8,10 L16,2" stroke="#2b2b2b" stroke-width="1.4"/><circle cx="12" cy="6" r="2.5" fill="none" stroke="#2b2b2b"/></svg>
<svg style="left:6px;top:681px" width="20" height="20" viewBox="0 0 20 20" ><path d="M9,1 L5,9 L7,12 H11 L13,9 Z" fill="none" stroke="#2b2b2b" stroke-width="1.4"/><path d="M9,3 V9" stroke="#2b2b2b"/><rect x="6" y="13" width="6" height="5" fill="none" stroke="#2b2b2b" stroke-width="1.3"/><path d="M20,20 h-4 l4,-4 z" fill="#555"/></svg>
<svg style="left:6px;top:723px" width="20" height="20" viewBox="0 0 20 20" ><path d="M9.5,3 V17 M2.5,10 H16.5" stroke="#a8a8a8" stroke-width="1.6"/></svg>
<svg style="left:33px;top:120px" width="17" height="16" viewBox="0 0 17 16" ><path d="M8.5,0.5 L16.5,7.5 H14 V15.5 H10 V10.5 H7 V15.5 H3 V7.5 H0.5 Z" fill="#2b2b2b"/></svg>
<div class="t" style="left:58px;top:120.5px;font-size:11.6px;color:#1a1a1a">Welcome Screen</div>
<div class="t" style="left:173px;top:120.5px;font-size:11.6px;color:#1a1a1a">Painterly Brush tool.c..*</div>
<svg style="left:324px;top:122px" width="12" height="12" viewBox="0 0 12 12" ><path d="M6,0.5 V11.5 M0.5,6 H11.5" stroke="#bcbcbc" stroke-width="1.4"/></svg>
<svg style="left:0px;top:0px" width="1920" height="1040" viewBox="0 0 1920 1040" style="pointer-events:none"><path d="M75.9,153 V155" stroke="#b0b0b0" stroke-width="1"/><path d="M95.2,148 V155" stroke="#707070" stroke-width="1"/><text x="95.2" y="148" text-anchor="middle" font-family="Liberation Sans" font-size="9.5" fill="#6a6a6a">12</text><path d="M114.5,153 V155" stroke="#b0b0b0" stroke-width="1"/><path d="M133.9,152 V155" stroke="#8a8a8a" stroke-width="1"/><path d="M153.2,153 V155" stroke="#b0b0b0" stroke-width="1"/><path d="M172.5,148 V155" stroke="#707070" stroke-width="1"/><text x="172.5" y="148" text-anchor="middle" font-family="Liberation Sans" font-size="9.5" fill="#6a6a6a">10</text><path d="M191.8,153 V155" stroke="#b0b0b0" stroke-width="1"/><path d="M211.2,152 V155" stroke="#8a8a8a" stroke-width="1"/><path d="M230.5,153 V155" stroke="#b0b0b0" stroke-width="1"/><path d="M249.8,148 V155" stroke="#707070" stroke-width="1"/><text x="249.8" y="148" text-anchor="middle" font-family="Liberation Sans" font-size="9.5" fill="#6a6a6a">8</text><path d="M269.1,153 V155" stroke="#b0b0b0" stroke-width="1"/><path d="M288.4,152 V155" stroke="#8a8a8a" stroke-width="1"/><path d="M307.8,153 V155" stroke="#b0b0b0" stroke-width="1"/><path d="M327.1,148 V155" stroke="#707070" stroke-width="1"/><text x="327.1" y="148" text-anchor="middle" font-family="Liberation Sans" font-size="9.5" fill="#6a6a6a">6</text><path d="M346.4,153 V155" stroke="#b0b0b0" stroke-width="1"/><path d="M365.8,152 V155" stroke="#8a8a8a" stroke-width="1"/><path d="M385.1,153 V155" stroke="#b0b0b0" stroke-width="1"/><path d="M404.4,148 V155" stroke="#707070" stroke-width="1"/><text x="404.4" y="148" text-anchor="middle" font-family="Liberation Sans" font-size="9.5" fill="#6a6a6a">4</text><path d="M423.7,153 V155" stroke="#b0b0b0" stroke-width="1"/><path d="M443.1,152 V155" stroke="#8a8a8a" stroke-width="1"/><path d="M462.4,153 V155" stroke="#b0b0b0" stroke-width="1"/><path d="M481.7,148 V155" stroke="#707070" stroke-width="1"/><text x="481.7" y="148" text-anchor="middle" font-family="Liberation Sans" font-size="9.5" fill="#6a6a6a">2</text><path d="M501.0,153 V155" stroke="#b0b0b0" stroke-width="1"/><path d="M520.4,152 V155" stroke="#8a8a8a" stroke-width="1"/><path d="M539.7,153 V155" stroke="#b0b0b0" stroke-width="1"/><path d="M559.0,148 V155" stroke="#707070" stroke-width="1"/><text x="559.0" y="148" text-anchor="middle" font-family="Liberation Sans" font-size="9.5" fill="#6a6a6a">0</text><path d="M578.3,153 V155" stroke="#b0b0b0" stroke-width="1"/><path d="M597.6,152 V155" stroke="#8a8a8a" stroke-width="1"/><path d="M617.0,153 V155" stroke="#b0b0b0" stroke-width="1"/><path d="M636.3,148 V155" stroke="#707070" stroke-width="1"/><text x="636.3" y="148" text-anchor="middle" font-family="Liberation Sans" font-size="9.5" fill="#6a6a6a">2</text><path d="M655.6,153 V155" stroke="#b0b0b0" stroke-width="1"/><path d="M675.0,152 V155" stroke="#8a8a8a" stroke-width="1"/><path d="M694.3,153 V155" stroke="#b0b0b0" stroke-width="1"/><path d="M713.6,148 V155" stroke="#707070" stroke-width="1"/><text x="713.6" y="148" text-anchor="middle" font-family="Liberation Sans" font-size="9.5" fill="#6a6a6a">4</text><path d="M732.9,153 V155" stroke="#b0b0b0" stroke-width="1"/><path d="M752.2,152 V155" stroke="#8a8a8a" stroke-width="1"/><path d="M771.6,153 V155" stroke="#b0b0b0" stroke-width="1"/><path d="M790.9,148 V155" stroke="#707070" stroke-width="1"/><text x="790.9" y="148" text-anchor="middle" font-family="Liberation Sans" font-size="9.5" fill="#6a6a6a">6</text><path d="M810.2,153 V155" stroke="#b0b0b0" stroke-width="1"/><path d="M829.5,152 V155" stroke="#8a8a8a" stroke-width="1"/><path d="M848.9,153 V155" stroke="#b0b0b0" stroke-width="1"/><path d="M868.2,148 V155" stroke="#707070" stroke-width="1"/><text x="868.2" y="148" text-anchor="middle" font-family="Liberation Sans" font-size="9.5" fill="#6a6a6a">8</text><path d="M887.5,153 V155" stroke="#b0b0b0" stroke-width="1"/><path d="M906.8,152 V155" stroke="#8a8a8a" stroke-width="1"/><path d="M926.2,153 V155" stroke="#b0b0b0" stroke-width="1"/><path d="M945.5,148 V155" stroke="#707070" stroke-width="1"/><text x="945.5" y="148" text-anchor="middle" font-family="Liberation Sans" font-size="9.5" fill="#6a6a6a">10</text><path d="M964.8,153 V155" stroke="#b0b0b0" stroke-width="1"/><path d="M984.1,152 V155" stroke="#8a8a8a" stroke-width="1"/><path d="M1003.5,153 V155" stroke="#b0b0b0" stroke-width="1"/><path d="M1022.8,148 V155" stroke="#707070" stroke-width="1"/><text x="1022.8" y="148" text-anchor="middle" font-family="Liberation Sans" font-size="9.5" fill="#6a6a6a">12</text><path d="M1042.1,153 V155" stroke="#b0b0b0" stroke-width="1"/><path d="M1061.5,152 V155" stroke="#8a8a8a" stroke-width="1"/><path d="M1080.8,153 V155" stroke="#b0b0b0" stroke-width="1"/><path d="M1100.1,148 V155" stroke="#707070" stroke-width="1"/><text x="1100.1" y="148" text-anchor="middle" font-family="Liberation Sans" font-size="9.5" fill="#6a6a6a">14</text><path d="M1119.4,153 V155" stroke="#b0b0b0" stroke-width="1"/><path d="M1138.8,152 V155" stroke="#8a8a8a" stroke-width="1"/><path d="M1158.1,153 V155" stroke="#b0b0b0" stroke-width="1"/><path d="M1177.4,148 V155" stroke="#707070" stroke-width="1"/><text x="1177.4" y="148" text-anchor="middle" font-family="Liberation Sans" font-size="9.5" fill="#6a6a6a">16</text><path d="M1196.7,153 V155" stroke="#b0b0b0" stroke-width="1"/><path d="M1216.0,152 V155" stroke="#8a8a8a" stroke-width="1"/><path d="M1235.4,153 V155" stroke="#b0b0b0" stroke-width="1"/><path d="M1254.7,148 V155" stroke="#707070" stroke-width="1"/><text x="1254.7" y="148" text-anchor="middle" font-family="Liberation Sans" font-size="9.5" fill="#6a6a6a">18</text><path d="M1274.0,153 V155" stroke="#b0b0b0" stroke-width="1"/><path d="M1293.3,152 V155" stroke="#8a8a8a" stroke-width="1"/><path d="M1312.7,153 V155" stroke="#b0b0b0" stroke-width="1"/><path d="M1332.0,148 V155" stroke="#707070" stroke-width="1"/><text x="1332.0" y="148" text-anchor="middle" font-family="Liberation Sans" font-size="9.5" fill="#6a6a6a">20</text><path d="M1351.3,153 V155" stroke="#b0b0b0" stroke-width="1"/><path d="M1370.7,152 V155" stroke="#8a8a8a" stroke-width="1"/><path d="M1390.0,153 V155" stroke="#b0b0b0" stroke-width="1"/><path d="M1409.3,148 V155" stroke="#707070" stroke-width="1"/><text x="1409.3" y="148" text-anchor="middle" font-family="Liberation Sans" font-size="9.5" fill="#6a6a6a">22</text><path d="M1428.6,153 V155" stroke="#b0b0b0" stroke-width="1"/><path d="M1447.9,152 V155" stroke="#8a8a8a" stroke-width="1"/><path d="M1467.3,153 V155" stroke="#b0b0b0" stroke-width="1"/><text x="1505" y="148" text-anchor="end" font-family="Liberation Sans" font-size="9.5" fill="#7a7a7a">inches</text><path d="M37,143 L45,151 M37,143 V148 M37,143 H42" stroke="#888" stroke-width="1" fill="none"/><path d="M45,935.2 H48" stroke="#8a8a8a" stroke-width="1"/><path d="M46,915.9 H48" stroke="#b0b0b0" stroke-width="1"/><path d="M42,896.5 H49" stroke="#707070" stroke-width="1"/><text transform="translate(42,896.5) rotate(-90)" x="0" y="0" text-anchor="middle" font-family="Liberation Sans" font-size="9.5" fill="#6a6a6a">0</text><path d="M46,877.1 H48" stroke="#b0b0b0" stroke-width="1"/><path d="M45,857.8 H48" stroke="#8a8a8a" stroke-width="1"/><path d="M46,838.5 H48" stroke="#b0b0b0" stroke-width="1"/><path d="M42,819.1 H49" stroke="#707070" stroke-width="1"/><text transform="translate(42,819.1) rotate(-90)" x="0" y="0" text-anchor="middle" font-family="Liberation Sans" font-size="9.5" fill="#6a6a6a">2</text><path d="M46,799.8 H48" stroke="#b0b0b0" stroke-width="1"/><path d="M45,780.4 H48" stroke="#8a8a8a" stroke-width="1"/><path d="M46,761.0 H48" stroke="#b0b0b0" stroke-width="1"/><path d="M42,741.7 H49" stroke="#707070" stroke-width="1"/><text transform="translate(42,741.7) rotate(-90)" x="0" y="0" text-anchor="middle" font-family="Liberation Sans" font-size="9.5" fill="#6a6a6a">4</text><path d="M46,722.4 H48" stroke="#b0b0b0" stroke-width="1"/><path d="M45,703.0 H48" stroke="#8a8a8a" stroke-width="1"/><path d="M46,683.6 H48" stroke="#b0b0b0" stroke-width="1"/><path d="M42,664.3 H49" stroke="#707070" stroke-width="1"/><text transform="translate(42,664.3) rotate(-90)" x="0" y="0" text-anchor="middle" font-family="Liberation Sans" font-size="9.5" fill="#6a6a6a">6</text><path d="M46,645.0 H48" stroke="#b0b0b0" stroke-width="1"/><path d="M45,625.6 H48" stroke="#8a8a8a" stroke-width="1"/><path d="M46,606.2 H48" stroke="#b0b0b0" stroke-width="1"/><path d="M42,586.9 H49" stroke="#707070" stroke-width="1"/><text transform="translate(42,586.9) rotate(-90)" x="0" y="0" text-anchor="middle" font-family="Liberation Sans" font-size="9.5" fill="#6a6a6a">8</text><path d="M46,567.5 H48" stroke="#b0b0b0" stroke-width="1"/><path d="M45,548.2 H48" stroke="#8a8a8a" stroke-width="1"/><path d="M46,528.8 H48" stroke="#b0b0b0" stroke-width="1"/><path d="M42,509.5 H49" stroke="#707070" stroke-width="1"/><text transform="translate(42,509.5) rotate(-90)" x="0" y="0" text-anchor="middle" font-family="Liberation Sans" font-size="9.5" fill="#6a6a6a">10</text><path d="M46,490.1 H48" stroke="#b0b0b0" stroke-width="1"/><path d="M45,470.8 H48" stroke="#8a8a8a" stroke-width="1"/><path d="M46,451.4 H48" stroke="#b0b0b0" stroke-width="1"/><path d="M42,432.1 H49" stroke="#707070" stroke-width="1"/><text transform="translate(42,432.1) rotate(-90)" x="0" y="0" text-anchor="middle" font-family="Liberation Sans" font-size="9.5" fill="#6a6a6a">12</text><path d="M46,412.7 H48" stroke="#b0b0b0" stroke-width="1"/><path d="M45,393.4 H48" stroke="#8a8a8a" stroke-width="1"/><path d="M46,374.0 H48" stroke="#b0b0b0" stroke-width="1"/><path d="M42,354.7 H49" stroke="#707070" stroke-width="1"/><text transform="translate(42,354.7) rotate(-90)" x="0" y="0" text-anchor="middle" font-family="Liberation Sans" font-size="9.5" fill="#6a6a6a">14</text><path d="M46,335.3 H48" stroke="#b0b0b0" stroke-width="1"/><path d="M45,316.0 H48" stroke="#8a8a8a" stroke-width="1"/><path d="M46,296.6 H48" stroke="#b0b0b0" stroke-width="1"/><path d="M42,277.3 H49" stroke="#707070" stroke-width="1"/><text transform="translate(42,277.3) rotate(-90)" x="0" y="0" text-anchor="middle" font-family="Liberation Sans" font-size="9.5" fill="#6a6a6a">16</text><path d="M46,257.9 H48" stroke="#b0b0b0" stroke-width="1"/><path d="M45,238.6 H48" stroke="#8a8a8a" stroke-width="1"/><path d="M46,219.2 H48" stroke="#b0b0b0" stroke-width="1"/><path d="M42,199.9 H49" stroke="#707070" stroke-width="1"/><text transform="translate(42,199.9) rotate(-90)" x="0" y="0" text-anchor="middle" font-family="Liberation Sans" font-size="9.5" fill="#6a6a6a">18</text><path d="M46,180.5 H48" stroke="#b0b0b0" stroke-width="1"/><path d="M45,161.2 H48" stroke="#8a8a8a" stroke-width="1"/><text transform="translate(42,976) rotate(-90)" x="0" y="0" text-anchor="start" font-family="Liberation Sans" font-size="9.5" fill="#7a7a7a">inches</text></svg>
<div style="left:1493px;top:157px;width:15px;height:20px;background:#f0f0f0"></div>
<div style="left:1493px;top:958px;width:15px;height:22px;background:#f0f0f0"></div>
<svg style="left:1494px;top:163px" width="11" height="8" viewBox="0 0 11 8" ><path d="M1,6.5 L5.5,2 L10,6.5" fill="none" stroke="#444" stroke-width="1.8"/></svg>
<svg style="left:1494px;top:964px" width="11" height="8" viewBox="0 0 11 8" ><path d="M1,1.5 L5.5,6 L10,1.5" fill="none" stroke="#444" stroke-width="1.8"/></svg>
<svg style="left:56px;top:982px" width="8" height="11" viewBox="0 0 8 11" ><path d="M6.5,1 L2,5.5 L6.5,10" fill="none" stroke="#333" stroke-width="1.8"/></svg>
<svg style="left:1478px;top:982px" width="8" height="11" viewBox="0 0 8 11" ><path d="M1.5,1 L6,5.5 L1.5,10" fill="none" stroke="#333" stroke-width="1.8"/></svg>
<svg style="left:1493px;top:980px" width="13" height="13" viewBox="0 0 13 13" ><circle cx="5.5" cy="5.5" r="4.2" fill="none" stroke="#333" stroke-width="1.2"/><path d="M8.5,8.5 L12,12" stroke="#333" stroke-width="1.6"/><path d="M3.5,5.5 H7.5 M5.5,3.5 V7.5" stroke="#333" stroke-width="0.9"/></svg>
<svg style="left:37px;top:1001px" width="12" height="12" viewBox="0 0 12 12" ><path d="M6,0.5 V11.5 M0.5,6 H11.5" stroke="#222" stroke-width="1.4"/></svg>
<svg style="left:61px;top:1001px" width="11" height="12" viewBox="0 0 11 12" ><path d="M1,0.5 V11.5" stroke="#c4c4c4" stroke-width="1.2"/><path d="M10,0.5 V11.5 L3,6 Z" fill="#c4c4c4"/></svg>
<svg style="left:86px;top:1001px" width="8" height="12" viewBox="0 0 8 12" ><path d="M7,0.5 V11.5 L0.5,6 Z" fill="#c4c4c4"/></svg>
<div class="t" style="left:108px;top:1001px;font-size:12px;color:#9a9a9a">1&nbsp; of&nbsp; 1</div>
<svg style="left:160px;top:1001px" width="8" height="12" viewBox="0 0 8 12" ><path d="M1,0.5 V11.5 L7.5,6 Z" fill="#c4c4c4"/></svg>
<svg style="left:182px;top:1001px" width="11" height="12" viewBox="0 0 11 12" ><path d="M10,0.5 V11.5" stroke="#c4c4c4" stroke-width="1.2"/><path d="M1,0.5 V11.5 L8,6 Z" fill="#c4c4c4"/></svg>
<svg style="left:204px;top:1001px" width="12" height="12" viewBox="0 0 12 12" ><path d="M6,0.5 V11.5 M0.5,6 H11.5" stroke="#222" stroke-width="1.4"/></svg>
<div class="t" style="left:254px;top:1001px;font-size:12px;color:#1a1a1a">Page 1</div>
<svg style="left:33px;top:1023px" width="5" height="16" viewBox="0 0 5 16" ><g fill="#bbb"><rect x="0" y="1" width="1" height="1"/><rect x="3" y="1" width="1" height="1"/><rect x="1.5" y="4" width="1" height="1"/><rect x="0" y="7" width="1" height="1"/><rect x="3" y="7" width="1" height="1"/><rect x="1.5" y="10" width="1" height="1"/><rect x="0" y="13" width="1" height="1"/><rect x="3" y="13" width="1" height="1"/></g></svg>
<svg style="left:46px;top:1024px" width="6" height="11" viewBox="0 0 6 11" ><path d="M0.5,0.5 V10.5 L5.5,5.5 Z" fill="#444"/></svg>
<svg style="left:62px;top:1022px" width="15" height="15" viewBox="0 0 15 15" ><path d="M2,13 L9,6" stroke="#b8763a" stroke-width="2.2"/><path d="M8,4.5 L10.5,7 M10,2 L13,5 L11.5,6.5 L8.5,3.5 Z" stroke="#2b2b2b" stroke-width="2" fill="#2b2b2b"/></svg>
<svg style="left:83px;top:1024px" width="8" height="11" viewBox="0 0 8 11" ><path d="M6.5,0.5 L1.5,5.5 L6.5,10.5" fill="none" stroke="#cdcdcd" stroke-width="1.4"/></svg>
<div style="left:96px;top:1021px;width:18px;height:18px;background:#fff;border:1px solid #333"></div>
<svg style="left:97px;top:1022px" width="16" height="16" viewBox="0 0 16 16" ><path d="M2,14 L14,2" stroke="#e05050" stroke-width="1.2"/></svg>
<div class="t" style="left:620px;top:1022.5px;font-style:italic;font-size:11.5px;color:#b4b4b4">Drag colors (or objects) here to store these colors with your document</div>
<svg style="left:1471px;top:1024px" width="8" height="11" viewBox="0 0 8 11" ><path d="M1.5,0.5 L6.5,5.5 L1.5,10.5" fill="none" stroke="#c8c8c8" stroke-width="1.4"/></svg>
<svg style="left:1487px;top:1024px" width="11" height="11" viewBox="0 0 11 11" ><path d="M1,1 L5,5.5 L1,10 M5.5,1 L9.5,5.5 L5.5,10" fill="none" stroke="#c8c8c8" stroke-width="1.2"/></svg>
<div class="t" style="left:1519px;top:121px;font-size:12px;color:#1a1a1a">Objects</div>
<svg style="left:1863px;top:123px" width="11" height="10" viewBox="0 0 11 10" ><path d="M0.5,0.5 L5,5 L0.5,9.5 Z M5,0.5 L9.5,5 L5,9.5 Z" fill="#b8b8b8"/></svg>
<svg style="left:1883px;top:123px" width="10" height="10" viewBox="0 0 10 10" ><path d="M1,1 L9,9 M9,1 L1,9" stroke="#b8b8b8" stroke-width="1.3"/></svg>
<div style="left:1514px;top:148px;width:363px;height:24px;background:#fff;border:1px solid #c4c4c4"></div>
<div class="t" style="left:1518px;top:153px;font-size:11.6px;color:#606060">Search</div>
<div style="left:1514px;top:177px;width:24px;height:24px;background:#fff;border:1px solid #b4b4b4"></div>
<svg style="left:1518px;top:180px" width="17" height="18" viewBox="0 0 17 18" ><path d="M3,3 L5,1 H12 V6 M3,3 V16 H8" fill="none" stroke="#2b2b2b" stroke-width="1.2"/><path d="M3,3 L5,1 V3 Z" fill="#2b2b2b"/><path d="M11.5,8 L16,10.5 L11.5,13 L7,10.5 Z" fill="#fff" stroke="#2b2b2b"/><path d="M7,12.5 L11.5,15 L16,12.5 L16,14 L11.5,16.5 L7,14 Z" fill="#2b2b2b"/></svg>
<svg style="left:1546px;top:180px" width="18" height="17" viewBox="0 0 18 17" ><path d="M9,1 L17,6 L9,11 L1,6 Z" fill="#fff" stroke="#2b2b2b" stroke-width="1.6"/><path d="M1,8.5 L9,13.5 L17,8.5 V11 L9,16.5 L1,11 Z" fill="#2b2b2b"/></svg>
<div class="t" style="left:1572px;top:182px;font-weight:bold;font-size:11.3px;color:#111">Page 1</div>
<div class="t" style="left:1626px;top:182px;font-size:11.6px;color:#1a1a1a">Layer 3</div>
<svg style="left:1854px;top:178px" width="21" height="21" viewBox="0 0 21 21" ><g transform="translate(10,10)"><circle r="5.4" fill="none" stroke="#2b2b2b" stroke-width="3"/><g stroke="#2b2b2b" stroke-width="2.6"><path d="M0,-8.8 V-6 M0,8.8 V6 M-8.8,0 H-6 M8.8,0 H6 M-6.2,-6.2 L-4.2,-4.2 M6.2,6.2 L4.2,4.2 M-6.2,6.2 L-4.2,4.2 M6.2,-6.2 L4.2,-4.2"/></g></g><path d="M20,16 V20 H16 Z" fill="#888"/></svg>
<div style="left:1512px;top:204px;width:366px;height:1px;background:#dcdcdc"></div>
<div style="left:1513px;top:205px;width:365px;height:26px;background:#f2f2f2"></div>
<div style="left:1513px;top:465px;width:365px;height:25px;background:#f2f2f2"></div>
<div style="left:1513px;top:388px;width:365px;height:24px;background:#d9e9fa"></div>
<div style="left:1513px;top:230px;width:365px;height:1px;background:#e3e3e3"></div>
<div style="left:1513px;top:256px;width:365px;height:1px;background:#e3e3e3"></div>
<div style="left:1513px;top:282px;width:365px;height:1px;background:#e3e3e3"></div>
<div style="left:1513px;top:308px;width:365px;height:1px;background:#e3e3e3"></div>
<div style="left:1513px;top:490px;width:365px;height:1px;background:#e3e3e3"></div>
<div style="left:1513px;top:516px;width:365px;height:1px;background:#e3e3e3"></div>
<div style="left:1513px;top:542px;width:365px;height:1px;background:#e3e3e3"></div>
<div style="left:1513px;top:464px;width:365px;height:1px;background:#e3e3e3"></div>
<svg style="left:1522px;top:214px" width="10" height="7" viewBox="0 0 10 7" ><path d="M0.5,0.5 H9.5 L5,6.5 Z" fill="#2b2b2b"/></svg>
<div class="t" style="left:1537px;top:211px;font-weight:bold;font-size:11.4px;color:#111">Page 1</div>
<svg style="left:1537px;top:237px" width="13" height="13" viewBox="0 0 13 13" ><path d="M4,0.5 V12 M1,3 H12" stroke="#555" stroke-width="1"/><path d="M2,3 H6" stroke="#555"/></svg>
<div class="t" style="left:1555px;top:237px;font-size:11.6px;color:#1a1a1a">Guides</div>
<svg style="left:1848px;top:237px" width="13" height="12" viewBox="0 0 13 12" ><path d="M3.5,6 V0.8 H8 L9.5,2.3 V6" fill="none" stroke="#444" stroke-width="1"/><path d="M0.5,6.5 V11.5 H12.5 V6.5 Z M0.5,9 H12.5" fill="none" stroke="#444" stroke-width="1"/><path d="M5,4 L8,7" stroke="#444"/></svg>
<div style="left:1868px;top:237px;width:4px;height:15px;background:#1020e0;border-radius:2px"></div>
<svg style="left:1523px;top:265px" width="7" height="10" viewBox="0 0 7 10" ><path d="M0.5,0.5 V9.5 L6.5,5 Z" fill="#2b2b2b"/></svg>
<svg style="left:1538px;top:264px" width="13" height="13" viewBox="0 0 13 13" ><path d="M6.5,0.8 L12,4.5 L6.5,8.2 L1,4.5 Z" fill="#fff" stroke="#2b2b2b" stroke-width="1.4"/><path d="M1,6.3 L6.5,10 L12,6.3 V8.5 L6.5,12.5 L1,8.5 Z" fill="#2b2b2b"/></svg>
<div class="t" style="left:1555px;top:263px;font-size:11.6px;color:#1a1a1a">Layer 2</div>
<svg style="left:1833px;top:264px" width="12" height="12" viewBox="0 0 12 12" ><path d="M3,5 V3.5 A3,3 0 0 1 9,3.5 V5" fill="none" stroke="#2b2b2b" stroke-width="1.3"/><rect x="1.5" y="5" width="9" height="7" fill="#2b2b2b"/></svg>
<div style="left:1868px;top:263px;width:4px;height:15px;background:#151515;border-radius:2px"></div>
<svg style="left:1523px;top:291px" width="7" height="10" viewBox="0 0 7 10" ><path d="M0.5,0.5 V9.5 L6.5,5 Z" fill="#2b2b2b"/></svg>
<svg style="left:1538px;top:290px" width="13" height="13" viewBox="0 0 13 13" ><path d="M6.5,0.8 L12,4.5 L6.5,8.2 L1,4.5 Z" fill="#fff" stroke="#2b2b2b" stroke-width="1.4"/><path d="M1,6.3 L6.5,10 L12,6.3 V8.5 L6.5,12.5 L1,8.5 Z" fill="#2b2b2b"/></svg>
<div class="t" style="left:1555px;top:289px;font-size:11.6px;color:#1a1a1a">Layer 1</div>
<div style="left:1868px;top:289px;width:4px;height:15px;background:#151515;border-radius:2px"></div>
<svg style="left:1522px;top:318px" width="10" height="7" viewBox="0 0 10 7" ><path d="M0.5,0.5 H9.5 L5,6.5 Z" fill="#2b2b2b"/></svg>
<svg style="left:1538px;top:316px" width="13" height="13" viewBox="0 0 13 13" ><path d="M6.5,0.8 L12,4.5 L6.5,8.2 L1,4.5 Z" fill="#fff" stroke="#2b2b2b" stroke-width="1.4"/><path d="M1,6.3 L6.5,10 L12,6.3 V8.5 L6.5,12.5 L1,8.5 Z" fill="#2b2b2b"/></svg>
<div class="t" style="left:1555px;top:315px;font-weight:bold;font-size:11.6px;color:#111">Layer 3</div>
<div style="left:1868px;top:315px;width:4px;height:15px;background:#151515;border-radius:2px"></div>
<svg style="left:1532px;top:343px" width="7" height="10" viewBox="0 0 7 10" ><path d="M0.5,0.5 V9.5 L6.5,5 Z" fill="#2b2b2b"/></svg>
<svg style="left:1546px;top:340px" width="10" height="14" viewBox="0 0 10 14" ><path d="M2,1.5 H8" stroke="#1a1a7a" stroke-width="2"/><path d="M3,2 L1.5,13 M7,2 L8.5,13" stroke="#dde" stroke-width="1"/></svg>
<div class="t" style="left:1564px;top:341px;font-size:11.6px;color:#1a1a1a">Group of 2 Objects</div>
<svg style="left:1532px;top:369px" width="7" height="10" viewBox="0 0 7 10" ><path d="M0.5,0.5 V9.5 L6.5,5 Z" fill="#2b2b2b"/></svg>
<div class="t" style="left:1564px;top:367px;font-size:11.6px;color:#1a1a1a">Group of 15 Objects</div>
<svg style="left:1545px;top:392px" width="15" height="15" viewBox="0 0 15 15" ><circle cx="7.5" cy="7.5" r="6.5" fill="#22226e" stroke="#8fa0c8" stroke-width="1.3"/><path d="M3.5,9 L7.5,4 L11.5,9 Z" fill="#fff"/></svg>
<div class="t" style="left:1564px;top:393px;font-size:11.6px;color:#1a1a1a">Ellipse</div>
<svg style="left:1546px;top:418px" width="14" height="15" viewBox="0 0 14 15" ><defs><linearGradient id="r1" x1="0" y1="0" x2="1" y2="1"><stop offset="0" stop-color="#1a9ea8"/><stop offset="1" stop-color="#0f2a55"/></linearGradient></defs><rect width="14" height="15" fill="url(#r1)"/></svg>
<div class="t" style="left:1564px;top:419px;font-size:11.6px;color:#1a1a1a">Rectangle</div>
<svg style="left:1546px;top:444px" width="14" height="15" viewBox="0 0 14 15" ><defs><linearGradient id="r2" x1="0" y1="0" x2="0" y2="1"><stop offset="0" stop-color="#4cf0c0"/><stop offset="1" stop-color="#0a1a20"/></linearGradient></defs><rect width="14" height="15" fill="url(#r2)"/></svg>
<div class="t" style="left:1564px;top:445px;font-size:11.6px;color:#1a1a1a">Rectangle</div>
<svg style="left:1522px;top:474px" width="10" height="7" viewBox="0 0 10 7" ><path d="M0.5,0.5 H9.5 L5,6.5 Z" fill="#2b2b2b"/></svg>
<div class="t" style="left:1537px;top:471px;font-size:11.6px;color:#1a1a1a">Master Page</div>
<svg style="left:1537px;top:497px" width="13" height="13" viewBox="0 0 13 13" ><path d="M4,0.5 V12 M1,3 H12" stroke="#555" stroke-width="1"/><path d="M2,3 H6" stroke="#555"/></svg>
<div class="t" style="left:1555px;top:497px;font-size:11.6px;color:#1a1a1a">Guides (all pages)</div>
<svg style="left:1848px;top:497px" width="13" height="12" viewBox="0 0 13 12" ><path d="M3.5,6 V0.8 H8 L9.5,2.3 V6" fill="none" stroke="#444" stroke-width="1"/><path d="M0.5,6.5 V11.5 H12.5 V6.5 Z M0.5,9 H12.5" fill="none" stroke="#444" stroke-width="1"/><path d="M5,4 L8,7" stroke="#444"/></svg>
<div style="left:1868px;top:497px;width:4px;height:15px;background:#1020e0;border-radius:2px"></div>
<svg style="left:1538px;top:524px" width="12" height="12" viewBox="0 0 12 12" ><rect x="1" y="1" width="10" height="10" fill="none" stroke="#2b2b2b" stroke-width="1.2"/><rect x="3" y="3" width="6" height="6" fill="#2b2b2b"/></svg>
<div class="t" style="left:1555px;top:523px;font-size:11.6px;color:#1a1a1a">Desktop</div>
<svg style="left:1848px;top:523px" width="13" height="12" viewBox="0 0 13 12" ><path d="M3.5,6 V0.8 H8 L9.5,2.3 V6" fill="none" stroke="#444" stroke-width="1"/><path d="M0.5,6.5 V11.5 H12.5 V6.5 Z M0.5,9 H12.5" fill="none" stroke="#444" stroke-width="1"/><path d="M5,4 L8,7" stroke="#444"/></svg>
<div style="left:1868px;top:523px;width:4px;height:15px;background:#151515;border-radius:2px"></div>
<svg style="left:1537px;top:549px" width="13" height="13" viewBox="0 0 13 13" ><path d="M4,0.5 V12.5 M9,0.5 V12.5 M0.5,4 H12.5 M0.5,9 H12.5" stroke="#444" stroke-width="1.1"/></svg>
<div class="t" style="left:1555px;top:549px;font-size:11.6px;color:#1a1a1a">Document Grid</div>
<svg style="left:1816px;top:551px" width="14" height="10" viewBox="0 0 14 10" ><path d="M1,5 C4,0 10,0 13,5 C10,10 4,10 1,5 Z" fill="none" stroke="#555" stroke-width="1.1"/><circle cx="7" cy="5" r="2" fill="#555"/><path d="M2,1 L12,9" stroke="#555"/></svg>
<svg style="left:1834px;top:550px" width="11" height="12" viewBox="0 0 11 12" ><path d="M3,5 V3.5 A3,3 0 0 1 9,3.5 V5" fill="none" stroke="#c8c8c8" stroke-width="1.3"/><rect x="1.5" y="5" width="9" height="7" fill="#c8c8c8"/></svg>
<svg style="left:1849px;top:549px" width="13" height="12" viewBox="0 0 13 12" ><path d="M3.5,6 V0.8 H8 L9.5,2.3 V6" fill="none" stroke="#c8c8c8" stroke-width="1"/><path d="M0.5,6.5 V11.5 H12.5 V6.5 Z M0.5,9 H12.5" fill="none" stroke="#c8c8c8" stroke-width="1"/><path d="M5,4 L8,7" stroke="#c8c8c8"/></svg>
<div style="left:1868px;top:549px;width:4px;height:15px;background:#c8c8c8;border-radius:2px"></div>
<div style="left:1513px;top:1013px;width:365px;height:27px;background:#f2f2f2"></div>
<svg style="left:1518px;top:1017px" width="19" height="19" viewBox="0 0 19 19" ><path d="M1,8 L9,13 L17,8 V10.5 L9,15.5 L1,10.5 Z" fill="#2b2b2b"/><path d="M9,3 L17,8 L9,13 L1,8 Z" fill="#2b2b2b"/><rect x="11" y="0" width="8" height="8" fill="#1a9c3c"/><path d="M15,1.5 V6.5 M12.5,4 H17.5" stroke="#fff" stroke-width="1.3"/></svg>
<svg style="left:1546px;top:1017px" width="21" height="21" viewBox="0 0 21 21" ><path d="M1,6 L8,10 L15,6 M1,9.5 L8,13.5 L15,9.5 M1,13 L8,17 L15,13" fill="none" stroke="#2b2b2b" stroke-width="1.2"/><rect x="11" y="0" width="8" height="8" fill="#1a9c3c"/><path d="M15,1.5 V6.5 M12.5,4 H17.5" stroke="#fff" stroke-width="1.3"/><path d="M20,16 V20 H16 Z" fill="#888"/></svg>
<svg style="left:1575px;top:1017px" width="19" height="19" viewBox="0 0 19 19" ><text x="1" y="16" font-family="Liberation Serif" font-style="italic" font-weight="bold" font-size="13" fill="#2b2b2b">fx</text><rect x="11" y="0" width="8" height="8" fill="#1a9c3c"/><path d="M15,1.5 V6.5 M12.5,4 H17.5" stroke="#fff" stroke-width="1.3"/></svg>
<svg style="left:1605px;top:1018px" width="15" height="17" viewBox="0 0 15 17" ><path d="M1,3 H14 M5,3 V1 H10 V3" fill="none" stroke="#2b2b2b" stroke-width="1.6"/><path d="M2.5,4.5 H12.5 L11.5,16.5 H3.5 Z" fill="#2b2b2b"/><path d="M5.5,6.5 V14.5 M7.5,6.5 V14.5 M9.5,6.5 V14.5" stroke="#f2f2f2" stroke-width="1"/></svg>
<svg style="left:1756px;top:1017px" width="118" height="20" viewBox="0 0 118 20" ><path d="M1,10 H116 M1,4 V16 M57,5 V15 M116,4 V16" stroke="#999" stroke-width="1"/><rect x="31.5" y="2.5" width="5" height="15" fill="#fff" stroke="#3aa6d6" stroke-width="1.2"/></svg>
<svg style="left:1880px;top:145px" width="19" height="18" viewBox="0 0 19 18" ><path d="M1,6 L9.5,2 L18,6 L9.5,10 Z" fill="#2b2b2b"/><path d="M4,8 V14 C6,16 13,16 15,14 V8 L9.5,11 Z" fill="#2b2b2b"/><path d="M6,12 H13" stroke="#e0e0e0"/></svg>
<div class="t" style="left:1896px;top:166px;transform:rotate(90deg);transform-origin:0 0;font-size:12px;color:#1a1a1a">Learn</div>
<svg style="left:1880px;top:220px" width="19" height="20" viewBox="0 0 19 20" ><path d="M5,1 L11,7 L5,13 L-1,7 Z" transform="translate(3,0)" fill="#fff" stroke="#2b2b2b" stroke-width="1.8"/><rect x="6" y="6" width="3" height="3" fill="#e0a040"/><path d="M13,11 V16 M16,11 V16" stroke="#2b2b2b" stroke-width="1.2"/></svg>
<div class="t" style="left:1896px;top:244px;transform:rotate(90deg);transform-origin:0 0;font-size:12px;color:#1a1a1a">Properties</div>
<svg style="left:1880px;top:324px" width="19" height="18" viewBox="0 0 19 18" ><path d="M9.5,1 L18,6 L9.5,11 L1,6 Z" fill="#fff" stroke="#2b2b2b" stroke-width="1.4"/><path d="M1,9 L9.5,14 L18,9 L18,11 L9.5,16 L1,11 Z" fill="#2b2b2b"/></svg>
<div class="t" style="left:1896px;top:346px;transform:rotate(90deg);transform-origin:0 0;font-size:12px;color:#1a1a1a">Objects</div>
<svg style="left:1883px;top:416px" width="14" height="14" viewBox="0 0 14 14" ><path d="M7,0.5 V13.5 M0.5,7 H13.5" stroke="#b8b8b8" stroke-width="1.4"/></svg>
<svg style="left:1900px;top:118px" width="20" height="60" viewBox="0 0 20 60" ><g fill="#c8c8c8"><rect x="2" y="2" width="1" height="1"/><rect x="6" y="2" width="1" height="1"/><rect x="10" y="2" width="1" height="1"/><rect x="14" y="2" width="1" height="1"/><rect x="4" y="4" width="1" height="1"/><rect x="8" y="4" width="1" height="1"/><rect x="12" y="4" width="1" height="1"/><rect x="16" y="4" width="1" height="1"/></g><path d="M7,13 V21 L12,17 Z" fill="#555"/><path d="M4,40 L14,30" stroke="#c8c8c8" stroke-width="2.4"/><path d="M5,56 L10,51 L15,56" fill="none" stroke="#d0d0d0" stroke-width="1.4"/></svg>
<div style="left:1901px;top:182px;width:18px;height:17px;background:#fff;border:1px solid #444"></div>
<svg style="left:1902px;top:183px" width="16" height="15" viewBox="0 0 16 15" ><path d="M2,13 L14,2" stroke="#e05050" stroke-width="1.2"/></svg>
<div style="left:1901px;top:199px;width:18px;height:17px;background:#000000;border-left:1px solid #9a9a9a;border-right:1px solid #9a9a9a;border-bottom:1px solid rgba(0,0,0,0.12)"></div>
<div style="left:1901px;top:216px;width:18px;height:17px;background:#1a1a1a;border-left:1px solid #9a9a9a;border-right:1px solid #9a9a9a;border-bottom:1px solid rgba(0,0,0,0.12)"></div>
<div style="left:1901px;top:233px;width:18px;height:17px;background:#333333;border-left:1px solid #9a9a9a;border-right:1px solid #9a9a9a;border-bottom:1px solid rgba(0,0,0,0.12)"></div>
<div style="left:1901px;top:250px;width:18px;height:17px;background:#4d4d4d;border-left:1px solid #9a9a9a;border-right:1px solid #9a9a9a;border-bottom:1px solid rgba(0,0,0,0.12)"></div>
<div style="left:1901px;top:267px;width:18px;height:17px;background:#666666;border-left:1px solid #9a9a9a;border-right:1px solid #9a9a9a;border-bottom:1px solid rgba(0,0,0,0.12)"></div>
<div style="left:1901px;top:284px;width:18px;height:17px;background:#808080;border-left:1px solid #9a9a9a;border-right:1px solid #9a9a9a;border-bottom:1px solid rgba(0,0,0,0.12)"></div>
<div style="left:1901px;top:301px;width:18px;height:17px;background:#999999;border-left:1px solid #9a9a9a;border-right:1px solid #9a9a9a;border-bottom:1px solid rgba(0,0,0,0.12)"></div>
<div style="left:1901px;top:318px;width:18px;height:17px;background:#b3b3b3;border-left:1px solid #9a9a9a;border-right:1px solid #9a9a9a;border-bottom:1px solid rgba(0,0,0,0.12)"></div>
<div style="left:1901px;top:335px;width:18px;height:17px;background:#cccccc;border-left:1px solid #9a9a9a;border-right:1px solid #9a9a9a;border-bottom:1px solid rgba(0,0,0,0.12)"></div>
<div style="left:1901px;top:352px;width:18px;height:17px;background:#e6e6e6;border-left:1px solid #9a9a9a;border-right:1px solid #9a9a9a;border-bottom:1px solid rgba(0,0,0,0.12)"></div>
<div style="left:1901px;top:369px;width:18px;height:17px;background:#ffffff;border-left:1px solid #9a9a9a;border-right:1px solid #9a9a9a;border-bottom:1px solid rgba(0,0,0,0.12)"></div>
<div style="left:1901px;top:386px;width:18px;height:17px;background:#0000ff;border-left:1px solid #9a9a9a;border-right:1px solid #9a9a9a;border-bottom:1px solid rgba(0,0,0,0.12)"></div>
<div style="left:1901px;top:403px;width:18px;height:17px;background:#00e6ff;border-left:1px solid #9a9a9a;border-right:1px solid #9a9a9a;border-bottom:1px solid rgba(0,0,0,0.12)"></div>
<div style="left:1901px;top:420px;width:18px;height:17px;background:#00e600;border-left:1px solid #9a9a9a;border-right:1px solid #9a9a9a;border-bottom:1px solid rgba(0,0,0,0.12)"></div>
<div style="left:1901px;top:437px;width:18px;height:17px;background:#ffee00;border-left:1px solid #9a9a9a;border-right:1px solid #9a9a9a;border-bottom:1px solid rgba(0,0,0,0.12)"></div>
<div style="left:1901px;top:454px;width:18px;height:17px;background:#ff0000;border-left:1px solid #9a9a9a;border-right:1px solid #9a9a9a;border-bottom:1px solid rgba(0,0,0,0.12)"></div>
<div style="left:1901px;top:471px;width:18px;height:17px;background:#ff00ff;border-left:1px solid #9a9a9a;border-right:1px solid #9a9a9a;border-bottom:1px solid rgba(0,0,0,0.12)"></div>
<div style="left:1901px;top:488px;width:18px;height:17px;background:#8a00c8;border-left:1px solid #9a9a9a;border-right:1px solid #9a9a9a;border-bottom:1px solid rgba(0,0,0,0.12)"></div>
<div style="left:1901px;top:505px;width:18px;height:17px;background:#ff6600;border-left:1px solid #9a9a9a;border-right:1px solid #9a9a9a;border-bottom:1px solid rgba(0,0,0,0.12)"></div>
<div style="left:1901px;top:522px;width:18px;height:17px;background:#ff99cc;border-left:1px solid #9a9a9a;border-right:1px solid #9a9a9a;border-bottom:1px solid rgba(0,0,0,0.12)"></div>
<div style="left:1901px;top:539px;width:18px;height:17px;background:#6b3030;border-left:1px solid #9a9a9a;border-right:1px solid #9a9a9a;border-bottom:1px solid rgba(0,0,0,0.12)"></div>
<div style="left:1901px;top:556px;width:18px;height:17px;background:#ccccff;border-left:1px solid #9a9a9a;border-right:1px solid #9a9a9a;border-bottom:1px solid rgba(0,0,0,0.12)"></div>
<div style="left:1901px;top:573px;width:18px;height:17px;background:#9999ff;border-left:1px solid #9a9a9a;border-right:1px solid #9a9a9a;border-bottom:1px solid rgba(0,0,0,0.12)"></div>
<div style="left:1901px;top:590px;width:18px;height:17px;background:#6699ff;border-left:1px solid #9a9a9a;border-right:1px solid #9a9a9a;border-bottom:1px solid rgba(0,0,0,0.12)"></div>
<div style="left:1901px;top:607px;width:18px;height:17px;background:#6666ff;border-left:1px solid #9a9a9a;border-right:1px solid #9a9a9a;border-bottom:1px solid rgba(0,0,0,0.12)"></div>
<div style="left:1901px;top:624px;width:18px;height:17px;background:#6666cc;border-left:1px solid #9a9a9a;border-right:1px solid #9a9a9a;border-bottom:1px solid rgba(0,0,0,0.12)"></div>
<div style="left:1901px;top:641px;width:18px;height:17px;background:#003399;border-left:1px solid #9a9a9a;border-right:1px solid #9a9a9a;border-bottom:1px solid rgba(0,0,0,0.12)"></div>
<div style="left:1901px;top:658px;width:18px;height:17px;background:#000066;border-left:1px solid #9a9a9a;border-right:1px solid #9a9a9a;border-bottom:1px solid rgba(0,0,0,0.12)"></div>
<div style="left:1901px;top:675px;width:18px;height:17px;background:#336699;border-left:1px solid #9a9a9a;border-right:1px solid #9a9a9a;border-bottom:1px solid rgba(0,0,0,0.12)"></div>
<div style="left:1901px;top:692px;width:18px;height:17px;background:#00ccff;border-left:1px solid #9a9a9a;border-right:1px solid #9a9a9a;border-bottom:1px solid rgba(0,0,0,0.12)"></div>
<div style="left:1901px;top:709px;width:18px;height:17px;background:#99ffff;border-left:1px solid #9a9a9a;border-right:1px solid #9a9a9a;border-bottom:1px solid rgba(0,0,0,0.12)"></div>
<div style="left:1901px;top:726px;width:18px;height:17px;background:#99cccc;border-left:1px solid #9a9a9a;border-right:1px solid #9a9a9a;border-bottom:1px solid rgba(0,0,0,0.12)"></div>
<div style="left:1901px;top:743px;width:18px;height:17px;background:#669999;border-left:1px solid #9a9a9a;border-right:1px solid #9a9a9a;border-bottom:1px solid rgba(0,0,0,0.12)"></div>
<div style="left:1901px;top:760px;width:18px;height:17px;background:#336666;border-left:1px solid #9a9a9a;border-right:1px solid #9a9a9a;border-bottom:1px solid rgba(0,0,0,0.12)"></div>
<div style="left:1901px;top:777px;width:18px;height:17px;background:#003333;border-left:1px solid #9a9a9a;border-right:1px solid #9a9a9a;border-bottom:1px solid rgba(0,0,0,0.12)"></div>
<div style="left:1901px;top:794px;width:18px;height:17px;background:#006633;border-left:1px solid #9a9a9a;border-right:1px solid #9a9a9a;border-bottom:1px solid rgba(0,0,0,0.12)"></div>
<div style="left:1901px;top:811px;width:18px;height:17px;background:#009933;border-left:1px solid #9a9a9a;border-right:1px solid #9a9a9a;border-bottom:1px solid rgba(0,0,0,0.12)"></div>
<div style="left:1901px;top:828px;width:18px;height:17px;background:#339966;border-left:1px solid #9a9a9a;border-right:1px solid #9a9a9a;border-bottom:1px solid rgba(0,0,0,0.12)"></div>
<div style="left:1901px;top:845px;width:18px;height:17px;background:#33cc66;border-left:1px solid #9a9a9a;border-right:1px solid #9a9a9a;border-bottom:1px solid rgba(0,0,0,0.12)"></div>
<div style="left:1901px;top:862px;width:18px;height:17px;background:#33cc33;border-left:1px solid #9a9a9a;border-right:1px solid #9a9a9a;border-bottom:1px solid rgba(0,0,0,0.12)"></div>
<div style="left:1901px;top:879px;width:18px;height:17px;background:#66ffcc;border-left:1px solid #9a9a9a;border-right:1px solid #9a9a9a;border-bottom:1px solid rgba(0,0,0,0.12)"></div>
<div style="left:1901px;top:896px;width:18px;height:17px;background:#33cc99;border-left:1px solid #9a9a9a;border-right:1px solid #9a9a9a;border-bottom:1px solid rgba(0,0,0,0.12)"></div>
<div style="left:1901px;top:913px;width:18px;height:17px;background:#99cc99;border-left:1px solid #9a9a9a;border-right:1px solid #9a9a9a;border-bottom:1px solid rgba(0,0,0,0.12)"></div>
<div style="left:1901px;top:930px;width:18px;height:17px;background:#ccffcc;border-left:1px solid #9a9a9a;border-right:1px solid #9a9a9a;border-bottom:1px solid rgba(0,0,0,0.12)"></div>
<div style="left:1901px;top:947px;width:18px;height:17px;background:#99ff99;border-left:1px solid #9a9a9a;border-right:1px solid #9a9a9a;border-bottom:1px solid rgba(0,0,0,0.12)"></div>
<div style="left:1901px;top:964px;width:18px;height:17px;background:#669966;border-left:1px solid #9a9a9a;border-right:1px solid #9a9a9a;border-bottom:1px solid rgba(0,0,0,0.12)"></div>
<div style="left:1901px;top:981px;width:18px;height:17px;background:#669933;border-left:1px solid #9a9a9a;border-right:1px solid #9a9a9a;border-bottom:1px solid rgba(0,0,0,0.12)"></div>
<svg style="left:1903px;top:1001px" width="14" height="10" viewBox="0 0 14 10" ><path d="M2,2 L7,7 L12,2" fill="none" stroke="#c0c0c0" stroke-width="1.4"/></svg>
<svg style="left:1903px;top:1019px" width="14" height="12" viewBox="0 0 14 12" ><path d="M2,1 L6,6 L2,11 M7,1 L11,6 L7,11" fill="none" stroke="#c0c0c0" stroke-width="1.2"/></svg></body></html>
